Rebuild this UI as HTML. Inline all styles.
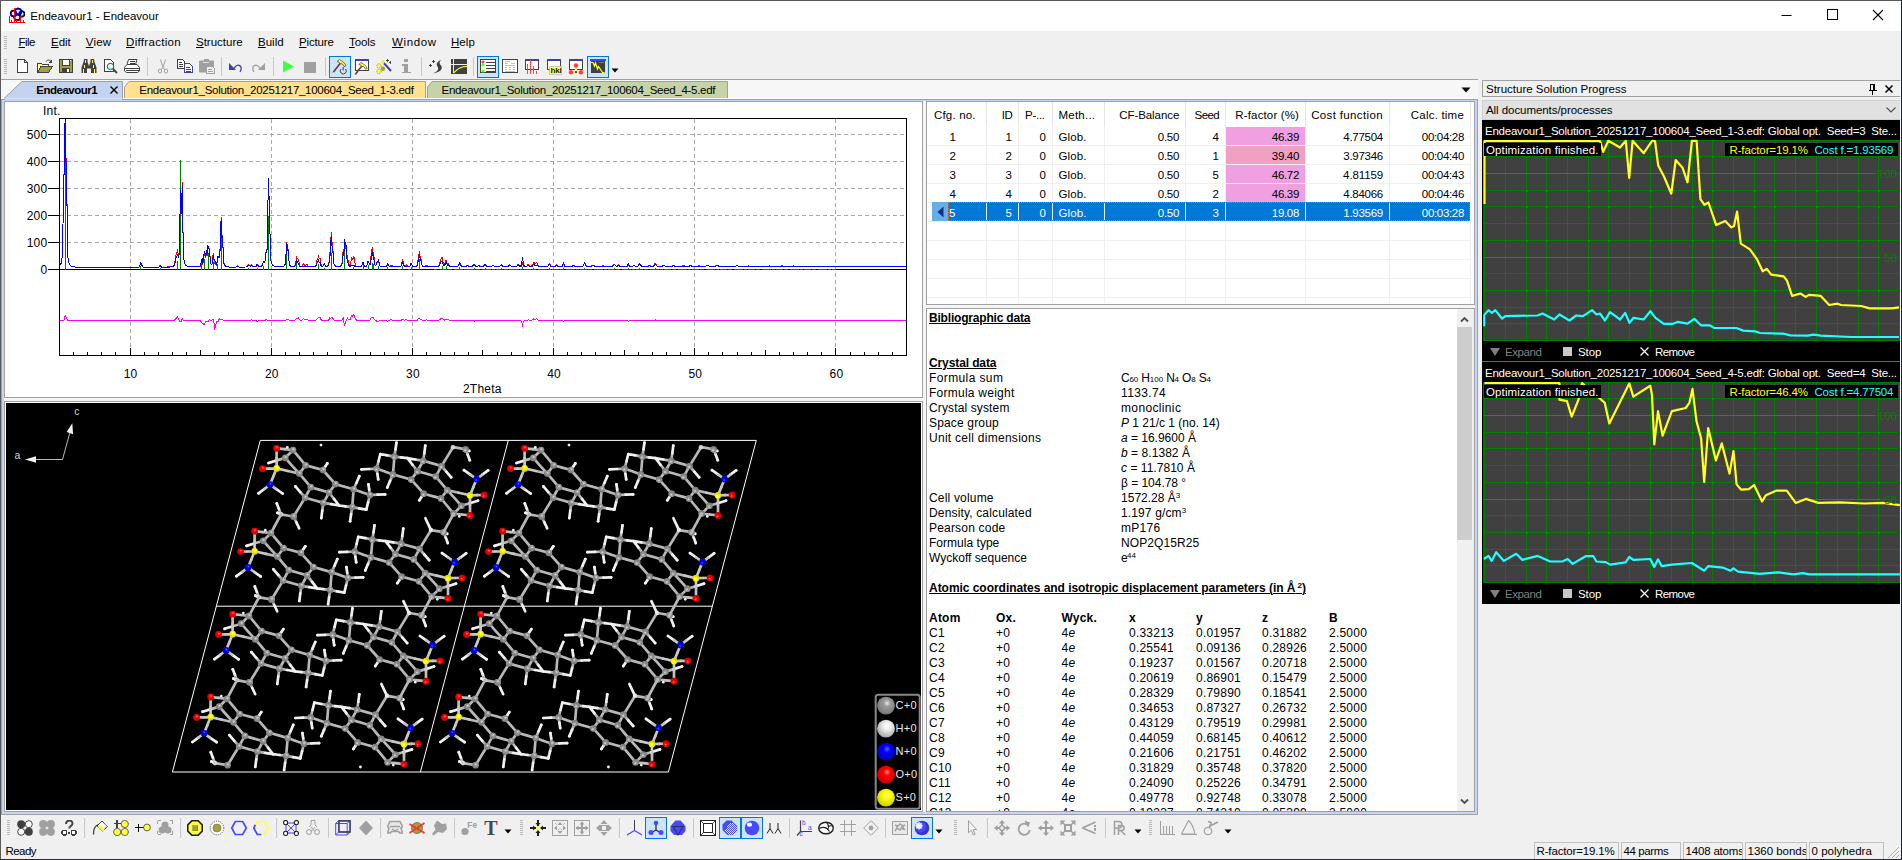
<!DOCTYPE html>
<html><head><meta charset="utf-8"><title>Endeavour1 - Endeavour</title>
<style>
html,body{margin:0;padding:0}
body{width:1902px;height:860px;position:relative;overflow:hidden;background:#f0f0f0;font-family:"Liberation Sans", sans-serif;font-size:12px;color:#000}
u{text-decoration:underline;text-underline-offset:1px}
</style></head><body>
<div style="position:absolute;left:0px;top:0px;width:1902px;height:31px;background:#fff"></div>
<div style="position:absolute;left:30.3px;top:10.87px;font-size:11.5px;line-height:1;white-space:nowrap;color:#000;letter-spacing:0.030px;">Endeavour1 - Endeavour</div>
<svg style="position:absolute;left:1770px;top:0px;" width="132" height="31" viewBox="0 0 132 31"><path d="M11.5 15.5h10" stroke="#000" stroke-width="1" fill="none"/><rect x="57.5" y="9.5" width="10" height="10" stroke="#000" fill="none"/><path d="M103 10l10 10M113 10l-10 10" stroke="#000" stroke-width="1.1" fill="none"/></svg>
<svg style="position:absolute;left:9px;top:7px;" width="16" height="16" viewBox="0 0 16 16"><rect x="2" y="1" width="13" height="12" fill="#b8f4e4" opacity=".55"/><circle cx="4.5" cy="6.5" r="2.8" fill="none" stroke="#0000ff" stroke-width="1.7"/><circle cx="4.5" cy="6.5" r="2.8" fill="none" stroke="#000" stroke-width="1.7" stroke-dasharray="1.3 1.5"/><circle cx="9" cy="4.8" r="3.2" fill="none" stroke="#0000ff" stroke-width="1.7"/><circle cx="9" cy="4.8" r="3.2" fill="none" stroke="#000" stroke-width="1.7" stroke-dasharray="1.3 1.5"/><circle cx="8.3" cy="10.2" r="3" fill="none" stroke="#0000ff" stroke-width="1.7"/><circle cx="8.3" cy="10.2" r="3" fill="none" stroke="#000" stroke-width="1.7" stroke-dasharray="1.3 1.5"/><circle cx="13" cy="7" r="2.6" fill="none" stroke="#0000ff" stroke-width="1.7"/><circle cx="13" cy="7" r="2.6" fill="none" stroke="#000" stroke-width="1.7" stroke-dasharray="1.3 1.5"/><path d="M0 15.5h16M.5 9v7M5.5 1v15M11.5 9v7M2.5 13v3M7.5 13v3M14.5 13v3" stroke="#f00" fill="none" shape-rendering="crispEdges"/></svg>
<div style="position:absolute;left:18.5px;top:36.87px;font-size:11.5px;line-height:1;white-space:nowrap;color:#000;letter-spacing:-0.577px;"><u>F</u>ile</div>
<div style="position:absolute;left:51px;top:36.87px;font-size:11.5px;line-height:1;white-space:nowrap;color:#000;letter-spacing:-0.043px;"><u>E</u>dit</div>
<div style="position:absolute;left:85.8px;top:36.87px;font-size:11.5px;line-height:1;white-space:nowrap;color:#000;letter-spacing:0.160px;"><u>V</u>iew</div>
<div style="position:absolute;left:126px;top:36.87px;font-size:11.5px;line-height:1;white-space:nowrap;color:#000;letter-spacing:0.314px;"><u>D</u>iffraction</div>
<div style="position:absolute;left:196px;top:36.87px;font-size:11.5px;line-height:1;white-space:nowrap;color:#000;letter-spacing:-0.009px;"><u>S</u>tructure</div>
<div style="position:absolute;left:258px;top:36.87px;font-size:11.5px;line-height:1;white-space:nowrap;color:#000;letter-spacing:0.005px;"><u>B</u>uild</div>
<div style="position:absolute;left:299px;top:36.87px;font-size:11.5px;line-height:1;white-space:nowrap;color:#000;letter-spacing:-0.166px;"><u>P</u>icture</div>
<div style="position:absolute;left:349px;top:36.87px;font-size:11.5px;line-height:1;white-space:nowrap;color:#000;letter-spacing:-0.090px;"><u>T</u>ools</div>
<div style="position:absolute;left:392px;top:36.87px;font-size:11.5px;line-height:1;white-space:nowrap;color:#000;letter-spacing:0.619px;"><u>W</u>indow</div>
<div style="position:absolute;left:451px;top:36.87px;font-size:11.5px;line-height:1;white-space:nowrap;color:#000;letter-spacing:0.048px;"><u>H</u>elp</div>
<svg style="position:absolute;left:4px;top:36px;" width="3" height="13" viewBox="0 0 3 13"><rect x="0" y="0" width="3" height="1" fill="#b8b8b8"/><rect x="0" y="2" width="3" height="1" fill="#b8b8b8"/><rect x="0" y="4" width="3" height="1" fill="#b8b8b8"/><rect x="0" y="6" width="3" height="1" fill="#b8b8b8"/><rect x="0" y="8" width="3" height="1" fill="#b8b8b8"/><rect x="0" y="10" width="3" height="1" fill="#b8b8b8"/><rect x="0" y="12" width="3" height="1" fill="#b8b8b8"/></svg>
<svg style="position:absolute;left:4px;top:59px;" width="3" height="15" viewBox="0 0 3 15"><rect x="0" y="0" width="3" height="1" fill="#b8b8b8"/><rect x="0" y="2" width="3" height="1" fill="#b8b8b8"/><rect x="0" y="4" width="3" height="1" fill="#b8b8b8"/><rect x="0" y="6" width="3" height="1" fill="#b8b8b8"/><rect x="0" y="8" width="3" height="1" fill="#b8b8b8"/><rect x="0" y="10" width="3" height="1" fill="#b8b8b8"/><rect x="0" y="12" width="3" height="1" fill="#b8b8b8"/><rect x="0" y="14" width="3" height="1" fill="#b8b8b8"/></svg>
<div style="position:absolute;left:1px;top:79px;width:1477px;height:1px;background:#a0a0a0"></div>
<div style="position:absolute;left:1px;top:80px;width:1477px;height:19px;background:#f7f7f7"></div>
<div style="position:absolute;left:1px;top:98px;width:1477px;height:1px;background:#fff"></div>
<div style="position:absolute;left:1px;top:99px;width:1477px;height:716px;background:#c4d5f5;box-sizing:border-box;border:1px solid #a0a0a0"></div>
<svg style="position:absolute;left:0px;top:79px;" width="760" height="22" viewBox="0 0 760 22"><path d="M4 19.5 L22 2.5 H122.5 V19.5" fill="#c4d3f0" stroke="#a0a0a0"/><path d="M5 20.5H122" stroke="#c4d3f0" stroke-width="2"/><path d="M124.5 19 V8 L129 2.5 H425.5 V19" fill="#ffe18e" stroke="#a0a0a0"/><path d="M427.5 19 V8 L432 2.5 H727.5 V19" fill="#c5d3a6" stroke="#a0a0a0"/><path d="M110.5 7.5l7 7M117.5 7.5l-7 7" stroke="#000" stroke-width="1.4"/></svg>
<div style="position:absolute;left:36.3px;top:85.07px;font-size:11.5px;line-height:1;white-space:nowrap;color:#000;font-weight:bold;letter-spacing:-0.503px;">Endeavour1</div>
<div style="position:absolute;left:139.3px;top:85.07px;font-size:11.5px;line-height:1;white-space:nowrap;color:#000;letter-spacing:-0.280px;">Endeavour1_Solution_20251217_100604_Seed_1-3.edf</div>
<div style="position:absolute;left:441.5px;top:85.07px;font-size:11.5px;line-height:1;white-space:nowrap;color:#000;letter-spacing:-0.293px;">Endeavour1_Solution_20251217_100604_Seed_4-5.edf</div>
<svg style="position:absolute;left:1460px;top:86px;" width="12" height="8" viewBox="0 0 12 8"><path d="M1.5 1.5h9l-4.5 5z" fill="#000"/></svg>
<div style="position:absolute;left:4px;top:101px;width:919px;height:297px;background:#fff;box-sizing:border-box;border:1px solid #a0a0a0"><svg style="position:absolute;left:0;top:0" width="917" height="295" viewBox="5 102 917 295"><path d="M60 242.5H906M60 215.5H906M60 188.5H906M60 161.5H906M60 134.5H906M130.5 119V355M271.5 119V355M412.5 119V355M553.5 119V355M694.5 119V355M835.5 119V355" stroke="#a8a8a8" stroke-dasharray="4 3" fill="none" shape-rendering="crispEdges"/><path d="M48 269.5H59M48 242.5H59M48 215.5H59M48 188.5H59M48 161.5H59M48 134.5H59M73.5 355V352M87.5 355V352M101.5 355V352M115.5 355V352M130.5 355V348M144.5 355V352M158.5 355V352M172.5 355V352M186.5 355V352M200.5 355V350M214.5 355V352M228.5 355V352M243.5 355V352M257.5 355V352M271.5 355V348M285.5 355V352M299.5 355V352M313.5 355V352M327.5 355V352M341.5 355V350M355.5 355V352M370.5 355V352M384.5 355V352M398.5 355V352M412.5 355V348M426.5 355V352M440.5 355V352M454.5 355V352M468.5 355V352M482.5 355V350M497.5 355V352M511.5 355V352M525.5 355V352M539.5 355V352M553.5 355V348M567.5 355V352M581.5 355V352M595.5 355V352M610.5 355V352M624.5 355V350M638.5 355V352M652.5 355V352M666.5 355V352M680.5 355V352M694.5 355V348M708.5 355V352M722.5 355V352M737.5 355V352M751.5 355V352M765.5 355V350M779.5 355V352M793.5 355V352M807.5 355V352M821.5 355V352M835.5 355V348M850.5 355V352M864.5 355V352M878.5 355V352M892.5 355V352M906.5 355V350" stroke="#000" fill="none" shape-rendering="crispEdges"/><path d="M59 269.5H907" stroke="#000" shape-rendering="crispEdges"/><path d="M300 269.5H440" stroke="#008000" stroke-dasharray="2 9 1 14 3 7" shape-rendering="crispEdges"/><path d="M440 269.5H836" stroke="#008000" stroke-dasharray="7 1 4 2 9 1 3 1" shape-rendering="crispEdges"/><path d="M65.5 270V119M140.5 270V266M160.5 270V268M177.5 270V261M180.5 270V160M201.5 270V264M204.5 270V259M208.5 270V253M213.5 270V262M217.5 270V264M221.5 270V221M248.5 270V268M257.5 270V268M263.5 270V266M268.5 270V216M286.5 270V245M296.5 270V263M318.5 270V264M324.5 270V268M331.5 270V253M344.5 270V251M353.5 270V267M363.5 270V265M368.5 270V265M372.5 270V263M373.5 270V264M378.5 270V266M387.5 270V267M402.5 270V266M411.5 270V267M419.5 270V259M442.5 270V266M446.5 270V266M459.5 270V267M467.5 270V269M474.5 270V268M485.5 270V268M492.5 270V269M501.5 270V268M509.5 270V269M522.5 270V267M533.5 270V268M549.5 270V268M563.5 270V268M573.5 270V269M584.5 270V268M614.5 270V268M628.5 270V268M639.5 270V268M655.5 270V268M673.5 270V269M690.5 270V269M707.5 270V269M737.5 270V269" stroke="#008000" fill="none" shape-rendering="crispEdges"/><polyline points="59.5,265.6 60.2,265.0 60.9,263.8 61.6,261.7 62.3,255.2 63.0,224.1 63.7,186.9 64.4,159.6 65.1,118.5 65.9,158.2 66.6,158.0 67.3,237.5 68.0,257.9 68.7,262.1 69.4,264.0 70.1,265.1 70.8,265.7 71.5,266.1 72.2,266.4 72.9,266.6 73.6,266.8 75.0,267.0 77.1,267.2 80.7,267.4 91.3,267.5 137.8,267.3 138.6,267.2 139.3,266.8 140.0,265.3 140.7,263.0 141.4,263.4 142.1,265.7 142.8,266.9 143.5,267.2 144.9,267.4 158.3,267.2 159.0,266.9 159.7,265.7 160.4,265.4 161.1,266.7 161.8,267.2 170.3,266.9 171.7,266.7 172.4,266.5 173.1,266.2 173.8,265.6 174.6,263.9 175.3,259.5 176.0,255.0 176.7,253.6 177.4,249.5 178.1,253.6 178.8,257.5 179.5,248.0 180.2,204.0 180.9,190.6 181.6,213.2 182.3,182.5 183.0,231.7 183.7,257.9 184.4,262.5 185.1,264.3 185.8,265.2 186.5,265.8 187.3,266.2 188.0,266.4 188.7,266.6 190.1,266.8 192.2,267.0 199.3,266.7 200.0,266.4 200.7,265.2 201.4,261.9 202.1,261.0 202.8,263.7 203.5,262.3 204.2,254.0 204.9,255.0 205.6,258.3 206.3,252.1 207.0,255.8 207.7,247.9 208.4,248.4 209.1,248.3 209.8,253.4 210.5,263.1 211.3,264.7 212.0,263.9 212.7,257.6 213.4,252.7 214.1,260.6 214.8,263.7 215.5,264.8 216.2,265.2 216.9,263.6 217.6,258.3 218.3,258.0 219.0,256.3 219.7,253.5 220.4,244.6 221.1,217.5 221.8,236.6 222.5,235.6 223.3,254.0 224.0,263.4 224.7,265.2 225.4,266.0 226.1,266.4 226.8,266.6 227.5,266.8 228.9,267.0 231.7,267.1 236.0,267.0 236.7,266.5 237.4,265.9 238.1,266.5 238.8,267.0 240.2,267.2 245.8,267.0 246.5,266.8 247.3,266.3 248.0,265.3 248.7,264.7 249.4,265.2 250.1,266.0 250.8,265.6 251.5,264.8 252.2,265.8 252.9,266.7 253.6,266.9 255.0,266.9 255.7,266.7 256.4,266.1 257.1,265.3 257.8,266.0 258.5,266.6 260.7,266.4 261.4,266.2 262.1,265.4 262.8,263.3 263.5,261.4 264.2,262.2 264.9,262.1 265.6,255.5 266.3,248.9 267.0,250.8 267.7,217.9 268.4,177.8 269.1,198.9 269.8,224.5 270.5,255.9 271.2,262.3 272.0,264.3 272.7,265.2 273.4,265.8 274.1,266.1 274.8,266.4 275.5,266.5 276.9,266.7 282.5,266.6 283.2,266.4 284.0,266.0 284.7,265.3 285.4,263.0 286.1,253.2 286.8,241.7 287.5,248.1 288.2,249.5 288.9,259.8 289.6,264.9 290.3,265.8 291.0,266.2 291.7,266.4 293.8,266.3 294.5,266.0 295.2,264.6 296.0,260.8 296.7,257.3 297.4,258.9 298.1,259.0 298.8,261.0 299.5,264.8 300.2,266.1 300.9,266.4 301.6,266.4 302.3,265.9 303.0,264.6 303.7,263.9 304.4,265.2 305.1,266.0 305.8,265.6 306.5,264.6 307.2,264.8 308.0,266.0 308.7,266.7 309.4,266.8 314.3,266.7 315.0,266.4 315.7,265.8 316.4,263.3 317.1,259.9 317.8,258.7 318.5,256.4 319.2,258.6 320.0,257.8 320.7,263.2 321.4,265.8 322.1,266.2 322.8,266.2 323.5,265.5 324.2,264.2 324.9,264.9 325.6,266.1 326.3,266.3 327.0,266.2 327.7,265.8 328.4,265.0 329.1,261.2 329.8,253.5 330.5,249.1 331.2,232.4 332.0,242.0 332.7,243.4 333.4,259.2 334.1,264.5 334.8,265.6 335.5,266.0 336.2,266.3 337.6,266.5 339.7,266.3 340.4,266.1 341.1,265.8 341.8,264.8 342.5,259.5 343.2,249.4 344.0,251.5 344.7,243.1 345.4,247.9 346.1,246.9 346.8,256.9 347.5,256.0 348.2,261.9 348.9,264.9 349.6,265.2 350.3,264.3 351.0,261.2 351.7,258.3 352.4,259.5 353.1,258.5 353.8,256.1 354.5,259.9 355.2,264.3 355.9,265.8 356.7,266.3 357.4,266.5 358.8,266.6 360.9,266.6 361.6,266.2 362.3,264.6 363.0,262.8 363.7,264.6 364.4,266.1 365.1,266.4 365.8,266.4 366.5,266.2 367.2,264.9 367.9,262.0 368.7,262.3 369.4,264.6 370.1,264.1 370.8,258.1 371.5,252.7 372.2,247.2 372.9,251.9 373.6,252.4 374.3,260.8 375.0,265.0 375.7,265.4 376.4,264.4 377.1,262.8 377.8,262.3 378.5,261.3 379.2,263.9 379.9,266.0 380.7,266.5 381.4,266.7 383.5,266.8 385.6,266.7 386.3,266.4 387.0,265.6 387.7,264.9 388.4,265.5 389.1,266.2 389.8,266.1 390.5,265.4 391.2,264.9 391.9,265.4 392.7,266.2 393.4,266.6 394.1,266.8 399.7,266.6 400.4,266.4 401.1,265.7 401.8,263.2 402.5,260.3 403.2,261.7 403.9,264.8 404.7,265.8 405.4,265.3 406.1,264.7 406.8,265.4 407.5,266.3 408.2,266.6 409.6,266.4 410.3,265.6 411.0,263.5 411.7,263.8 412.4,265.9 413.1,266.5 415.2,266.5 415.9,266.4 416.7,266.0 417.4,264.7 418.1,259.4 418.8,255.7 419.5,250.7 420.2,257.9 420.9,258.8 421.6,263.5 422.3,265.8 423.0,266.3 424.4,266.3 425.1,266.0 425.8,265.7 426.5,265.5 427.2,265.7 427.9,266.1 428.7,266.5 429.4,266.7 437.8,266.4 438.5,266.2 439.2,265.3 439.9,262.9 440.6,260.0 441.4,258.3 442.1,257.5 442.8,260.9 443.5,264.3 444.2,265.1 444.9,263.9 445.6,260.9 446.3,260.4 447.0,263.1 447.7,264.0 448.4,263.7 449.1,264.8 449.8,266.0 450.5,266.5 451.9,266.7 456.9,266.6 457.6,266.4 458.3,265.8 459.0,264.5 459.7,263.6 460.4,264.5 461.1,265.8 461.8,266.4 462.5,266.6 465.4,266.6 466.1,266.3 466.8,265.8 467.5,265.5 468.2,265.8 468.9,266.3 469.6,266.6 471.7,266.7 472.4,266.5 473.1,265.8 473.8,264.8 474.5,265.0 475.2,266.0 475.9,266.5 476.6,266.5 477.4,266.3 478.1,265.8 478.8,265.4 479.5,265.8 480.2,266.3 480.9,266.6 482.3,266.6 483.0,266.4 483.7,265.8 484.4,264.8 485.1,264.1 485.8,264.8 486.5,265.8 487.2,266.4 487.9,266.6 490.8,266.6 491.5,266.2 492.2,265.6 492.9,265.2 493.6,265.6 494.3,266.2 495.0,266.6 496.4,266.7 499.2,266.6 499.9,266.3 500.6,265.6 501.4,265.2 502.1,265.6 502.8,266.3 503.5,266.6 507.0,266.7 507.7,266.5 508.4,266.1 509.1,265.2 509.8,264.7 510.5,265.2 511.2,266.1 511.9,266.5 512.6,266.7 516.2,266.6 516.9,266.2 517.6,265.0 518.3,264.1 519.0,265.0 519.7,266.1 520.4,266.4 521.1,266.3 521.8,265.2 522.5,263.5 523.2,265.2 523.9,266.3 524.6,266.5 526.1,266.4 526.8,266.0 527.5,265.1 528.2,264.6 528.9,265.1 529.6,265.9 530.3,266.3 531.0,266.3 531.7,266.0 532.4,265.1 533.1,263.4 533.8,262.2 534.5,263.0 535.2,263.9 535.9,263.3 536.6,262.7 537.3,263.8 538.1,265.3 538.8,266.2 539.5,266.5 540.9,266.7 547.2,266.5 547.9,266.1 548.6,264.7 549.3,263.6 550.1,264.7 550.8,266.1 551.5,266.5 554.3,266.5 555.0,266.1 555.7,265.4 556.4,265.0 557.1,265.4 557.8,266.2 558.5,266.5 559.9,266.7 561.3,266.7 562.1,266.4 562.8,265.4 563.5,264.2 564.2,265.4 564.9,266.4 565.6,266.7 571.2,266.6 571.9,266.3 572.6,265.7 573.3,265.3 574.1,265.6 574.8,266.3 575.5,266.6 576.9,266.8 581.8,266.6 582.5,266.5 583.2,265.8 583.9,264.0 584.6,262.5 585.3,264.0 586.1,265.8 586.8,266.4 587.5,266.6 590.3,266.5 591.0,266.3 591.7,265.8 592.4,265.3 593.1,265.0 593.8,265.3 594.5,265.8 595.2,266.3 595.9,266.6 597.3,266.7 600.9,266.5 601.6,266.3 602.3,265.9 603.0,265.8 603.7,265.9 604.4,266.3 605.1,266.5 606.5,266.8 611.5,266.6 612.2,266.4 612.9,265.8 613.6,264.8 614.3,264.1 615.0,264.7 615.7,265.7 616.4,266.2 617.1,266.0 617.8,265.3 618.5,264.9 619.2,265.4 619.9,266.1 620.6,266.5 622.0,266.7 626.3,266.7 627.0,266.5 627.7,265.7 628.4,264.7 629.1,265.6 629.8,266.5 630.5,266.7 631.9,266.6 632.6,266.3 633.3,265.8 634.0,265.5 634.8,265.8 635.5,266.3 636.2,266.5 636.9,266.6 637.6,266.4 638.3,265.8 639.0,264.8 639.7,264.2 640.4,264.8 641.1,265.9 641.8,266.4 642.5,266.6 647.5,266.6 648.2,266.2 648.9,265.6 649.6,265.2 650.3,265.6 651.0,266.2 651.7,266.4 652.4,266.5 653.1,266.2 653.8,265.5 654.5,264.2 655.2,263.3 655.9,264.2 656.6,265.5 657.3,266.3 658.0,266.5 660.9,266.6 661.6,266.3 662.3,265.9 663.0,265.5 663.7,265.2 664.4,265.5 665.1,266.0 665.8,266.4 666.5,266.6 670.8,266.6 671.5,266.5 672.2,266.1 672.9,265.7 673.6,265.5 674.3,265.7 675.0,266.1 675.7,266.5 676.4,266.7 681.3,266.5 682.0,266.3 682.8,265.9 683.5,265.8 684.2,265.9 684.9,266.3 685.6,266.5 687.0,266.7 688.4,266.7 689.1,266.4 689.8,266.0 690.5,265.8 691.2,266.0 691.9,266.5 692.6,266.7 696.2,266.7 696.9,266.5 697.6,266.1 698.3,265.7 699.0,265.5 699.7,265.7 700.4,266.1 701.1,266.4 701.8,266.6 704.6,266.6 705.3,266.4 706.0,266.0 706.7,265.5 707.5,265.2 708.2,265.5 708.9,266.0 709.6,266.4 710.3,266.6 714.5,266.6 715.2,266.3 715.9,265.8 716.6,265.3 717.3,265.0 718.0,265.3 718.7,265.8 719.5,266.3 720.2,266.6 721.6,266.7 725.1,266.6 725.8,266.4 726.5,266.2 727.9,266.2 728.6,266.4 729.3,266.6 730.7,266.8 734.3,266.7 735.0,266.5 735.7,266.1 736.4,265.7 737.1,265.5 737.8,265.7 738.5,266.1 739.2,266.5 739.9,266.7 746.3,266.6 747.0,266.3 747.7,266.0 748.4,265.8 749.1,266.0 749.8,266.3 750.5,266.6 751.2,266.7 756.2,266.6 756.9,266.4 757.6,266.2 759.0,266.2 759.7,266.4 760.4,266.7 761.8,266.8 766.7,266.7 767.5,266.6 768.2,266.3 768.9,266.0 769.6,265.8 770.3,266.0 771.0,266.3 771.7,266.6 772.4,266.7 779.4,266.7 780.2,266.6 780.9,266.3 781.6,266.0 782.3,265.8 783.0,266.0 783.7,266.3 784.4,266.6 785.1,266.7 790.7,266.7 791.4,266.6 792.2,266.3 792.9,266.0 793.6,265.8 794.3,266.0 795.0,266.3 795.7,266.6 796.4,266.7 805.6,266.7 806.3,266.5 807.0,266.2 808.4,266.2 809.1,266.5 809.8,266.7 811.2,266.8 819.7,266.7 820.4,266.5 821.1,266.2 822.5,266.2 823.2,266.5 823.9,266.7 825.3,266.9 835.9,266.9" fill="none" stroke="#ff0000" stroke-width="1" stroke-linejoin="miter" shape-rendering="crispEdges"/><polyline points="59.5,265.7 60.2,265.0 60.9,263.9 61.6,261.8 62.3,255.3 63.0,224.3 63.7,187.3 64.4,160.9 65.1,118.5 65.9,161.4 66.6,161.2 67.3,238.3 68.0,258.2 68.7,262.3 69.4,264.1 70.1,265.1 70.8,265.7 71.5,266.2 72.2,266.4 72.9,266.7 73.6,266.8 75.0,267.0 77.1,267.2 80.7,267.4 92.0,267.5 137.8,267.3 138.6,267.2 139.3,266.8 140.0,265.3 140.7,263.0 141.4,263.4 142.1,265.7 142.8,266.9 143.5,267.2 144.9,267.4 158.3,267.3 159.0,267.0 159.7,266.1 160.4,265.9 161.1,266.8 161.8,267.2 170.3,267.0 171.7,266.8 172.4,266.6 173.1,266.4 173.8,265.9 174.6,264.7 175.3,261.4 176.0,258.2 176.7,257.1 177.4,254.0 178.1,256.5 178.8,258.3 179.5,247.9 180.2,202.3 180.9,188.6 181.6,213.7 182.3,185.1 183.0,232.8 183.7,258.1 184.4,262.6 185.1,264.4 185.8,265.3 186.5,265.8 187.3,266.2 188.0,266.4 188.7,266.6 190.1,266.8 192.2,267.0 198.5,266.8 199.3,266.6 200.0,266.2 200.7,264.6 201.4,260.1 202.1,258.9 202.8,262.7 203.5,261.1 204.2,251.0 204.9,252.3 205.6,256.9 206.3,250.4 207.0,254.5 207.7,245.9 208.4,247.0 209.1,249.4 209.8,254.5 210.5,263.3 211.3,264.8 212.0,264.2 212.7,259.3 213.4,255.2 214.1,259.5 214.8,259.9 215.5,262.7 216.2,264.5 216.9,262.9 217.6,256.5 218.3,256.7 219.0,257.8 219.7,255.8 220.4,245.6 221.1,218.8 221.8,237.6 222.5,237.1 223.3,254.6 224.0,263.6 224.7,265.3 225.4,266.0 226.1,266.4 226.8,266.6 227.5,266.8 228.9,267.0 231.7,267.1 236.0,267.0 236.7,266.6 237.4,266.1 238.1,266.6 238.8,267.1 245.8,267.0 246.5,266.9 247.3,266.4 248.0,265.5 248.7,265.0 249.4,265.5 250.1,266.2 250.8,266.1 251.5,265.6 252.2,266.3 252.9,266.8 255.0,266.8 255.7,266.6 256.4,265.4 257.1,264.0 257.8,265.3 258.5,266.4 259.3,266.6 260.7,266.5 261.4,266.2 262.1,265.5 262.8,263.7 263.5,262.0 264.2,262.7 264.9,262.5 265.6,256.4 266.3,250.3 267.0,251.3 267.7,218.0 268.4,177.9 269.1,199.0 269.8,224.6 270.5,255.9 271.2,262.4 272.0,264.3 272.7,265.3 273.4,265.8 274.1,266.1 274.8,266.4 275.5,266.5 276.9,266.7 282.5,266.6 283.2,266.4 284.0,266.1 284.7,265.5 285.4,263.3 286.1,254.1 286.8,243.4 287.5,249.5 288.2,251.0 288.9,260.5 289.6,265.1 290.3,266.0 291.0,266.4 291.7,266.6 293.8,266.6 294.5,266.4 295.2,265.5 296.0,263.0 296.7,260.7 297.4,262.1 298.1,262.9 298.8,264.1 299.5,266.0 300.2,266.6 300.9,266.8 302.3,266.8 303.0,266.4 303.7,266.3 304.4,266.6 305.1,266.8 305.8,266.7 306.5,266.4 307.2,266.4 308.0,266.8 308.7,267.0 315.0,266.7 315.7,266.3 316.4,264.7 317.1,262.6 317.8,261.7 318.5,260.2 319.2,262.1 320.0,262.4 320.7,265.1 321.4,266.3 322.1,266.5 322.8,266.4 323.5,265.5 324.2,263.9 324.9,264.8 325.6,266.1 326.3,266.4 327.0,266.4 327.7,266.1 328.4,265.5 329.1,263.0 329.8,257.7 330.5,252.1 331.2,236.3 332.0,245.6 332.7,247.4 333.4,260.5 334.1,264.9 334.8,265.8 335.5,266.2 336.2,266.4 337.6,266.6 339.7,266.5 340.4,266.3 341.1,266.0 341.8,265.2 342.5,261.5 343.2,254.1 344.0,251.6 344.7,238.7 345.4,245.7 346.1,245.9 346.8,258.1 347.5,259.8 348.2,263.7 348.9,265.7 349.6,266.1 350.3,266.1 351.0,265.6 351.7,265.1 352.4,265.5 353.1,265.5 353.8,265.3 354.5,265.9 355.2,266.5 355.9,266.8 360.9,266.7 361.6,266.3 362.3,264.5 363.0,262.4 363.7,264.4 364.4,266.1 365.1,266.5 365.8,266.5 366.5,266.2 367.2,264.9 367.9,261.7 368.7,262.1 369.4,264.8 370.1,264.9 370.8,261.0 371.5,257.0 372.2,251.4 372.9,255.2 373.6,256.2 374.3,262.3 375.0,265.3 375.7,265.4 376.4,263.7 377.1,261.3 377.8,261.0 378.5,260.1 379.2,263.3 379.9,265.8 380.7,266.4 381.4,266.6 382.8,266.8 385.6,266.7 386.3,266.2 387.0,265.0 387.7,263.9 388.4,265.0 389.1,266.2 389.8,266.5 390.5,266.3 391.2,266.2 391.9,266.4 392.7,266.7 393.4,266.8 399.7,266.8 400.4,266.6 401.1,266.0 401.8,264.2 402.5,262.0 403.2,263.2 403.9,265.4 404.7,266.3 405.4,266.2 406.1,266.0 406.8,266.3 407.5,266.6 408.9,266.7 409.6,266.5 410.3,265.6 411.0,263.5 411.7,263.9 412.4,265.9 413.1,266.6 415.9,266.5 416.7,266.3 417.4,265.3 418.1,261.4 418.8,258.3 419.5,253.7 420.2,259.7 420.9,260.7 421.6,264.3 422.3,266.1 423.0,266.5 427.2,266.4 427.9,266.6 429.4,266.8 437.8,266.6 438.5,266.5 439.2,265.9 439.9,264.3 440.6,262.5 441.4,261.6 442.1,261.2 442.8,263.3 443.5,265.3 444.2,265.7 444.9,264.8 445.6,262.5 446.3,262.1 447.0,264.2 447.7,265.0 448.4,264.9 449.1,265.6 449.8,266.4 450.5,266.6 452.6,266.8 456.9,266.6 457.6,266.4 458.3,265.7 459.0,264.2 459.7,263.1 460.4,264.2 461.1,265.7 461.8,266.4 462.5,266.6 465.4,266.7 466.1,266.4 466.8,266.0 467.5,265.8 468.2,266.0 468.9,266.4 469.6,266.7 471.7,266.6 472.4,266.4 473.1,265.5 473.8,264.1 474.5,264.3 475.2,265.7 475.9,266.4 476.6,266.5 477.4,266.4 478.1,266.0 478.8,265.7 479.5,266.0 480.2,266.4 480.9,266.6 483.0,266.5 483.7,266.0 484.4,265.2 485.1,264.7 485.8,265.2 486.5,266.1 487.2,266.5 487.9,266.7 490.8,266.6 491.5,266.2 492.2,265.6 492.9,265.2 493.6,265.6 494.3,266.3 495.0,266.6 497.1,266.8 499.2,266.6 499.9,266.2 500.6,265.4 501.4,265.0 502.1,265.4 502.8,266.2 503.5,266.6 504.9,266.7 507.7,266.6 508.4,266.3 509.1,265.6 509.8,265.2 510.5,265.6 511.2,266.3 511.9,266.6 514.1,266.7 516.2,266.6 516.9,266.3 517.6,265.4 518.3,264.6 519.0,265.3 519.7,266.1 520.4,266.2 521.1,265.6 521.8,262.1 522.5,257.1 523.2,262.1 523.9,265.6 524.6,266.3 525.3,266.4 526.1,266.4 526.8,266.2 527.5,265.7 528.2,265.4 528.9,265.7 529.6,266.2 530.3,266.5 531.7,266.4 532.4,266.0 533.1,265.1 533.8,264.6 534.5,265.0 535.2,265.5 535.9,265.3 536.6,265.1 537.3,265.5 538.1,266.2 538.8,266.6 540.2,266.8 547.2,266.6 547.9,266.2 548.6,265.1 549.3,264.2 550.1,265.1 550.8,266.2 551.5,266.6 554.3,266.6 555.0,266.4 555.7,265.8 556.4,265.5 557.1,265.8 557.8,266.4 558.5,266.6 561.3,266.6 562.1,266.3 562.8,264.8 563.5,263.1 564.2,264.8 564.9,266.3 565.6,266.6 567.7,266.8 571.2,266.7 571.9,266.4 572.6,265.9 573.3,265.5 574.1,265.9 574.8,266.4 575.5,266.7 578.3,266.8 581.8,266.7 582.5,266.5 583.2,266.0 583.9,264.4 584.6,263.1 585.3,264.4 586.1,266.0 586.8,266.5 588.2,266.7 590.3,266.6 591.0,266.5 591.7,266.1 592.4,265.7 593.1,265.5 593.8,265.7 594.5,266.1 595.2,266.5 595.9,266.7 600.9,266.6 601.6,266.4 602.3,266.2 603.7,266.2 604.4,266.4 605.1,266.6 606.5,266.8 611.5,266.7 612.2,266.5 612.9,266.1 613.6,265.2 614.3,264.7 615.0,265.2 615.7,266.0 616.4,266.4 617.1,266.2 617.8,265.8 618.5,265.5 619.2,265.8 619.9,266.3 620.6,266.6 622.8,266.8 626.3,266.7 627.0,266.4 627.7,265.1 628.4,263.6 629.1,265.1 629.8,266.3 630.5,266.6 631.9,266.6 632.6,266.4 633.3,266.0 634.0,265.7 634.8,266.0 635.5,266.4 636.2,266.5 636.9,266.5 637.6,266.3 638.3,265.7 639.0,264.4 639.7,263.6 640.4,264.4 641.1,265.7 641.8,266.4 642.5,266.6 644.6,266.8 647.5,266.7 648.2,266.4 648.9,266.0 649.6,265.7 650.3,266.0 651.0,266.4 651.7,266.6 652.4,266.6 653.1,266.4 653.8,265.8 654.5,264.8 655.2,264.2 655.9,264.8 656.6,265.9 657.3,266.4 658.0,266.6 660.9,266.6 661.6,266.5 662.3,266.1 663.0,265.7 663.7,265.5 664.4,265.7 665.1,266.1 665.8,266.5 666.5,266.7 671.5,266.6 672.2,266.3 672.9,266.0 673.6,265.8 674.3,266.0 675.0,266.3 675.7,266.6 676.4,266.7 681.3,266.6 682.0,266.4 682.8,266.2 684.2,266.2 684.9,266.4 685.6,266.6 688.4,266.6 689.1,266.4 689.8,265.8 690.5,265.5 691.2,265.9 691.9,266.4 692.6,266.7 696.9,266.6 697.6,266.4 698.3,266.2 699.7,266.2 700.4,266.4 701.1,266.6 704.6,266.7 705.3,266.5 706.0,266.1 706.7,265.7 707.5,265.5 708.2,265.7 708.9,266.1 709.6,266.5 710.3,266.7 714.5,266.7 715.2,266.5 715.9,266.1 716.6,265.7 717.3,265.5 718.0,265.7 718.7,266.1 719.5,266.5 720.2,266.7 725.1,266.6 725.8,266.4 726.5,266.2 727.9,266.2 728.6,266.4 729.3,266.6 730.7,266.8 735.0,266.6 735.7,266.3 736.4,266.0 737.1,265.8 737.8,266.0 738.5,266.3 739.2,266.6 739.9,266.7 746.3,266.7 747.0,266.5 747.7,266.2 749.1,266.2 749.8,266.5 750.5,266.7 751.9,266.8 756.2,266.7 756.9,266.5 757.6,266.2 759.0,266.2 759.7,266.5 760.4,266.7 761.8,266.8 767.5,266.7 768.2,266.5 768.9,266.2 770.3,266.2 771.0,266.5 771.7,266.7 773.1,266.8 780.2,266.7 780.9,266.5 781.6,266.2 783.0,266.2 783.7,266.5 784.4,266.7 785.8,266.8 791.4,266.7 792.2,266.5 792.9,266.2 794.3,266.2 795.0,266.5 795.7,266.7 797.1,266.8 806.3,266.6 807.0,266.5 808.4,266.5 809.1,266.6 810.5,266.8 820.4,266.6 821.1,266.5 822.5,266.5 823.2,266.6 824.6,266.8 906.0,266.9" fill="none" stroke="#0000ff" stroke-width="1" stroke-linejoin="miter" shape-rendering="crispEdges"/><polyline points="59.5,320.5 63.0,320.4 63.7,320.2 64.4,319.0 65.1,315.2 65.9,317.2 66.6,318.1 67.3,319.9 68.0,320.3 68.7,320.4 72.2,320.5 159.0,320.4 159.7,320.2 160.4,320.2 161.1,320.4 161.8,320.5 173.1,320.4 173.8,320.3 174.6,320.0 175.3,319.1 176.0,318.3 176.7,318.0 177.4,317.3 178.1,318.5 178.8,319.9 179.5,320.6 180.2,321.7 180.9,321.9 181.6,320.2 182.3,318.7 183.0,319.8 183.7,320.3 184.4,320.4 192.9,320.5 199.3,320.6 200.0,320.7 200.7,321.1 201.4,322.3 202.1,323.2 202.8,323.3 203.5,323.7 204.2,324.7 204.9,323.6 205.6,321.9 206.3,321.9 207.0,321.4 207.7,321.9 208.4,321.4 209.1,319.7 209.8,319.7 210.5,320.4 211.3,320.4 212.0,320.3 212.7,319.4 213.4,319.5 214.1,323.9 214.8,328.2 215.5,326.7 216.2,323.1 216.9,321.5 217.6,321.8 218.3,321.4 219.0,319.5 219.7,318.9 220.4,319.8 221.1,319.6 221.8,319.8 222.5,319.5 223.3,320.1 224.0,320.4 226.1,320.5 236.7,320.4 237.4,320.3 238.1,320.4 239.5,320.5 248.0,320.3 250.1,320.3 250.8,320.2 251.5,319.9 252.2,320.2 252.9,320.4 254.3,320.5 255.0,320.5 255.7,320.6 256.4,321.0 257.1,321.4 257.8,321.0 258.5,320.6 259.3,320.5 262.1,320.4 262.8,320.2 263.5,320.1 264.2,320.2 264.9,320.3 265.6,319.9 266.3,319.6 267.0,320.1 267.7,320.4 270.5,320.5 284.7,320.4 285.4,320.3 286.1,319.9 286.8,319.3 287.5,319.5 288.2,319.4 288.9,320.0 289.6,320.3 293.8,320.3 294.5,320.2 295.2,319.9 296.0,319.0 296.7,318.1 297.4,318.2 298.1,317.7 298.8,318.3 299.5,319.7 300.2,320.1 300.9,320.2 301.6,320.2 302.3,319.9 303.0,319.2 303.7,318.8 304.4,319.5 305.1,320.0 305.8,319.8 306.5,319.2 307.2,319.4 308.0,320.0 308.7,320.3 309.4,320.4 315.0,320.3 315.7,320.1 316.4,319.5 317.1,318.7 317.8,318.4 318.5,317.9 319.2,318.1 320.0,317.3 320.7,319.2 321.4,320.1 322.1,320.3 322.8,320.4 323.5,320.5 324.2,320.7 324.9,320.6 325.6,320.5 327.0,320.4 327.7,320.3 328.4,320.1 329.1,319.3 329.8,317.6 330.5,318.4 331.2,317.8 332.0,318.0 332.7,317.7 333.4,319.6 334.1,320.2 334.8,320.3 336.2,320.4 341.1,320.3 341.8,320.2 342.5,319.3 343.2,318.3 344.0,322.6 344.7,324.7 345.4,322.2 346.1,321.2 346.8,319.6 347.5,317.8 348.2,319.2 348.9,319.9 349.6,319.9 350.3,319.2 351.0,317.4 351.7,315.7 352.4,316.3 353.1,315.6 353.8,314.1 354.5,316.4 355.2,318.9 355.9,319.8 356.7,320.1 357.4,320.2 358.8,320.3 360.9,320.4 361.6,320.5 362.3,320.6 363.0,320.8 363.7,320.6 364.4,320.5 367.2,320.5 367.9,320.7 368.7,320.6 369.4,320.4 370.1,320.0 370.8,318.4 371.5,317.5 372.2,317.5 372.9,318.1 373.6,317.9 374.3,319.4 375.0,320.3 375.7,320.5 376.4,321.0 377.1,321.6 377.8,321.4 378.5,321.3 379.2,320.9 379.9,320.6 381.4,320.5 385.6,320.5 386.3,320.6 387.0,320.9 387.7,321.1 388.4,320.9 389.1,320.5 389.8,320.2 390.5,319.9 391.2,319.6 391.9,319.8 392.7,320.2 393.4,320.4 394.8,320.4 400.4,320.4 401.1,320.2 401.8,319.8 402.5,319.2 403.2,319.5 403.9,320.0 404.7,320.1 405.4,319.8 406.1,319.6 406.8,319.9 407.5,320.3 408.2,320.4 416.7,320.3 417.4,320.1 418.1,319.1 418.8,318.7 419.5,318.4 420.2,319.2 420.9,319.2 421.6,319.9 422.3,320.3 424.4,320.3 425.1,320.1 425.8,320.0 426.5,319.9 427.2,320.0 427.9,320.2 428.7,320.3 429.4,320.4 438.5,320.3 439.2,320.1 439.9,319.5 440.6,318.8 441.4,318.2 442.1,317.9 442.8,318.8 443.5,319.8 444.2,320.1 444.9,319.9 445.6,319.4 446.3,319.3 447.0,319.7 447.7,319.8 448.4,319.6 449.1,319.9 449.8,320.3 450.5,320.4 453.4,320.5 458.3,320.6 459.0,320.8 459.7,320.9 460.4,320.8 461.1,320.6 462.5,320.5 466.1,320.4 467.5,320.3 468.9,320.4 471.7,320.5 472.4,320.6 473.1,320.7 473.8,321.0 474.5,321.0 475.2,320.7 475.9,320.5 477.4,320.4 478.1,320.4 480.9,320.5 483.7,320.4 484.4,320.2 485.1,320.1 485.8,320.2 486.5,320.4 487.2,320.4 499.2,320.5 500.6,320.6 503.5,320.5 507.7,320.4 508.4,320.4 509.1,320.2 509.8,320.1 510.5,320.2 511.2,320.4 511.9,320.4 516.9,320.4 517.6,320.3 518.3,320.2 519.0,320.3 519.7,320.5 520.4,320.7 521.1,321.0 521.8,322.7 522.5,325.0 523.2,322.7 523.9,321.0 524.6,320.7 525.3,320.6 526.1,320.5 526.8,320.3 527.5,320.1 528.2,319.9 528.9,320.0 529.6,320.2 530.3,320.3 531.0,320.3 531.7,320.2 532.4,319.9 533.1,319.3 533.8,318.9 534.5,319.1 535.2,319.4 535.9,319.1 536.6,318.9 537.3,319.3 538.1,319.9 538.8,320.2 539.5,320.3 541.6,320.4 547.9,320.4 548.6,320.2 549.3,320.1 550.1,320.2 550.8,320.4 555.0,320.4 555.7,320.2 556.4,320.1 557.1,320.2 557.8,320.4 558.5,320.4 561.3,320.5 562.1,320.6 562.8,320.9 563.5,321.2 564.2,320.9 564.9,320.6 566.3,320.5 571.9,320.4 573.3,320.3 574.8,320.4 583.2,320.4 583.9,320.2 584.6,320.1 585.3,320.2 586.1,320.4 591.0,320.4 591.7,320.3 592.4,320.2 593.8,320.2 594.5,320.3 595.2,320.4 597.3,320.5 602.3,320.3 605.1,320.4 612.2,320.4 612.9,320.3 613.6,320.2 614.3,320.1 615.0,320.2 615.7,320.3 617.1,320.3 617.8,320.2 618.5,320.1 619.2,320.2 619.9,320.4 620.6,320.4 625.6,320.5 627.0,320.6 627.7,320.9 628.4,321.2 629.1,320.9 629.8,320.6 631.2,320.5 633.3,320.4 636.2,320.5 637.6,320.5 638.3,320.6 639.0,320.8 639.7,320.9 640.4,320.8 641.1,320.6 641.8,320.5 646.8,320.5 647.5,320.4 648.2,320.4 648.9,320.2 649.6,320.1 650.3,320.2 651.0,320.3 652.4,320.4 653.1,320.4 653.8,320.3 654.5,320.1 655.2,319.9 655.9,320.1 656.6,320.3 657.3,320.4 663.7,320.3 665.1,320.4 667.2,320.5 672.2,320.4 673.6,320.3 675.0,320.4 677.1,320.5 682.0,320.4 683.5,320.3 684.9,320.4 687.0,320.5 689.8,320.6 692.6,320.5 696.9,320.4 697.6,320.3 698.3,320.2 699.7,320.2 700.4,320.3 701.1,320.4 703.2,320.5 706.7,320.3 709.6,320.4 715.2,320.4 715.9,320.3 716.6,320.2 718.0,320.2 718.7,320.3 719.5,320.4 721.6,320.5 735.7,320.4 737.1,320.3 738.5,320.4 740.6,320.5 747.0,320.4 748.4,320.3 749.8,320.4 751.9,320.5 768.2,320.4 769.6,320.3 771.0,320.4 773.1,320.5 780.9,320.4 782.3,320.3 783.7,320.4 785.8,320.5 792.2,320.4 793.6,320.3 795.0,320.4 797.1,320.5 806.3,320.4 807.7,320.3 809.1,320.4 811.2,320.5 820.4,320.4 821.8,320.3 823.2,320.4 825.3,320.5 906.0,320.5" fill="none" stroke="#ff00ff" stroke-width="1" shape-rendering="crispEdges"/><rect x="59.5" y="118.5" width="847" height="237" fill="none" stroke="#000" shape-rendering="crispEdges"/></svg><div style="position:absolute;left:38px;top:2.84px;font-size:12px;line-height:1;white-space:nowrap;letter-spacing:0.2px">Int.</div><div style="position:absolute;right:874.7px;top:161.84px;font-size:12px;line-height:1;white-space:nowrap;letter-spacing:0.2px">0</div><div style="position:absolute;right:874.7px;top:134.84px;font-size:12px;line-height:1;white-space:nowrap;letter-spacing:0.2px">100</div><div style="position:absolute;right:874.7px;top:107.84px;font-size:12px;line-height:1;white-space:nowrap;letter-spacing:0.2px">200</div><div style="position:absolute;right:874.7px;top:80.84px;font-size:12px;line-height:1;white-space:nowrap;letter-spacing:0.2px">300</div><div style="position:absolute;right:874.7px;top:53.84px;font-size:12px;line-height:1;white-space:nowrap;letter-spacing:0.2px">400</div><div style="position:absolute;right:874.7px;top:26.84px;font-size:12px;line-height:1;white-space:nowrap;letter-spacing:0.2px">500</div><div style="position:absolute;left:75.58333333333334px;width:100px;text-align:center;top:266.24px;font-size:12px;line-height:1;white-space:nowrap;letter-spacing:0.2px">10</div><div style="position:absolute;left:216.75px;width:100px;text-align:center;top:266.24px;font-size:12px;line-height:1;white-space:nowrap;letter-spacing:0.2px">20</div><div style="position:absolute;left:357.9166666666667px;width:100px;text-align:center;top:266.24px;font-size:12px;line-height:1;white-space:nowrap;letter-spacing:0.2px">30</div><div style="position:absolute;left:499.08333333333337px;width:100px;text-align:center;top:266.24px;font-size:12px;line-height:1;white-space:nowrap;letter-spacing:0.2px">40</div><div style="position:absolute;left:640.25px;width:100px;text-align:center;top:266.24px;font-size:12px;line-height:1;white-space:nowrap;letter-spacing:0.2px">50</div><div style="position:absolute;left:781.4166666666667px;width:100px;text-align:center;top:266.24px;font-size:12px;line-height:1;white-space:nowrap;letter-spacing:0.2px">60</div><div style="position:absolute;left:458px;top:280.84px;font-size:12px;line-height:1;white-space:nowrap;letter-spacing:0.2px">2Theta</div></div>
<div style="position:absolute;left:4px;top:398px;width:919px;height:3px;background:#f5f5f5"></div>
<div style="position:absolute;left:4px;top:401px;width:919px;height:411px;background:#fff;box-sizing:border-box;border:1px solid #a0a0a0;overflow:hidden"><svg style="position:absolute;left:0;top:0" width="917" height="409" viewBox="5 402 917 409"><defs><radialGradient id="gC" cx="0.56" cy="0.36" r="0.68"><stop offset="0" stop-color="#e4e4e4"/><stop offset="0.3" stop-color="#989898"/><stop offset="1" stop-color="#747474"/></radialGradient><radialGradient id="gO" cx="0.56" cy="0.36" r="0.68"><stop offset="0" stop-color="#ff8080"/><stop offset="0.3" stop-color="#ff0000"/><stop offset="1" stop-color="#c00000"/></radialGradient><radialGradient id="gS" cx="0.56" cy="0.36" r="0.68"><stop offset="0" stop-color="#ffffa0"/><stop offset="0.3" stop-color="#ffff00"/><stop offset="1" stop-color="#c8c800"/></radialGradient><radialGradient id="gN" cx="0.56" cy="0.36" r="0.68"><stop offset="0" stop-color="#6060ff"/><stop offset="0.3" stop-color="#0000ff"/><stop offset="1" stop-color="#0000b0"/></radialGradient><radialGradient id="gH" cx="0.56" cy="0.36" r="0.68"><stop offset="0" stop-color="#ffffff"/><stop offset="0.3" stop-color="#f0f0f0"/><stop offset="1" stop-color="#a0a0a0"/></radialGradient><g id="m"><path d="M22.7 5.2L11.4 2.6M16.4 -18.3L8.2 -19.2M16.4 -18.3L12.5 -14.4M8.6 -10.5L12.5 -14.4M8.6 -10.5L0.3 -8.0M8.6 -10.5L15.6 -2.6M22.7 5.2L15.6 -2.6M16.4 -18.3L22.7 -10.7M29.0 -3.1L22.7 -10.7M29.0 -3.1L25.9 1.0M22.7 5.2L25.9 1.0M29.0 -3.1L37.6 -0.8M46.3 1.6L37.6 -0.8M46.3 1.6L48.5 -1.7M46.3 1.6L52.5 8.6M58.8 15.7L52.5 8.6M58.8 15.7L55.7 19.9M52.5 24.1L55.7 19.9M58.8 15.7L68.0 18.3M77.1 20.9L68.0 18.3M22.7 5.2L28.5 12.0M34.2 18.8L28.5 12.0M34.2 18.8L43.4 21.5M52.5 24.1L43.4 21.5M34.2 18.8L31.3 24.1M28.5 29.3L31.3 24.1M28.5 29.3L23.7 23.7M28.5 29.3L37.6 31.9M46.8 34.5L37.6 31.9M46.8 34.5L49.7 29.3M52.5 24.1L49.7 29.3M46.8 34.5L45.7 42.1M46.8 34.5L54.6 35.8M52.5 24.1L57.5 30.6M75.6 38.7L69.0 37.9M77.1 20.9L85.2 23.8M93.3 26.7L85.2 23.8M77.1 20.9L76.3 29.8M75.6 38.7L76.3 29.8M77.1 20.9L79.9 14.4M93.3 26.7L92.6 21.3M93.3 26.7L100.9 26.3M93.3 26.7L91.5 34.0M75.6 38.7L82.6 40.0M75.6 38.7L74.5 45.8M28.5 29.3L22.7 38.7M17.0 48.1L22.7 38.7M17.0 48.1L10.7 47.1M4.4 46.0L10.7 47.1M4.4 46.0L2.3 40.6M4.4 46.0L2.6 45.2" stroke="#b8b8b8" stroke-width="2.7" stroke-linecap="round" fill="none"/><path d="M-18.1 24.9L-12.3 20.6M6.0 25.1L-0.3 20.7M-8.0 -5.4L0.3 -8.0M50.7 -5.0L48.5 -1.7M18.8 18.0L23.7 23.7M44.7 49.7L45.7 42.1M62.5 37.1L54.6 35.8M62.5 37.1L57.5 30.6M62.5 37.1L69.0 37.9M82.7 7.8L79.9 14.4M91.8 15.9L92.6 21.3M108.5 26.0L100.9 26.3M89.7 41.3L91.5 34.0M89.7 41.3L82.6 40.0M73.5 52.8L74.5 45.8M0.2 35.1L2.3 40.6M0.8 44.4L2.6 45.2" stroke="#f0f0f0" stroke-width="2.7" stroke-linecap="round" fill="none"/><path d="M0.0 -20.1L0.0 -10.0M-14.1 0.3L-7.1 0.2M0.0 -20.1L8.2 -19.2" stroke="#c0c0c0" stroke-width="2.7" stroke-linecap="round" fill="none"/><path d="M0.0 0.0L0.0 -10.0M0.0 0.0L-7.1 0.2M0.0 0.0L-3.3 8.1M0.0 0.0L11.4 2.6" stroke="#c8c8c8" stroke-width="2.7" stroke-linecap="round" fill="none"/><path d="M-6.6 16.2L-3.3 8.1M-6.6 16.2L-12.3 20.6M-6.6 16.2L-0.3 20.7" stroke="#c8c8c8" stroke-width="2.7" stroke-linecap="round" fill="none"/><circle cx="-18.1" cy="24.9" r="1.35" fill="#f4f4f4"/><circle cx="6.0" cy="25.1" r="1.35" fill="#f4f4f4"/><circle cx="10.7" cy="-21.1" r="1.35" fill="#f4f4f4"/><circle cx="-8.0" cy="-5.4" r="1.35" fill="#f4f4f4"/><circle cx="50.7" cy="-5.0" r="1.35" fill="#f4f4f4"/><circle cx="18.8" cy="18.0" r="1.35" fill="#f4f4f4"/><circle cx="44.7" cy="49.7" r="1.35" fill="#f4f4f4"/><circle cx="82.7" cy="7.8" r="1.35" fill="#f4f4f4"/><circle cx="91.8" cy="15.9" r="1.35" fill="#f4f4f4"/><circle cx="108.5" cy="26.0" r="1.35" fill="#f4f4f4"/><circle cx="89.7" cy="41.3" r="1.35" fill="#f4f4f4"/><circle cx="73.5" cy="52.8" r="1.35" fill="#f4f4f4"/><circle cx="62.5" cy="37.1" r="1.35" fill="#f4f4f4"/><circle cx="0.2" cy="35.1" r="1.35" fill="#f4f4f4"/><circle cx="0.8" cy="44.4" r="1.35" fill="#f4f4f4"/><circle cx="0.0" cy="0.0" r="3.4" fill="url(#gS)"/><circle cx="0.0" cy="-20.1" r="3.4" fill="url(#gO)"/><circle cx="-14.1" cy="0.3" r="3.4" fill="url(#gO)"/><circle cx="-6.6" cy="16.2" r="3.4" fill="url(#gN)"/><circle cx="16.4" cy="-18.3" r="3.35" fill="url(#gC)"/><circle cx="8.6" cy="-10.5" r="3.35" fill="url(#gC)"/><circle cx="29.0" cy="-3.1" r="3.35" fill="url(#gC)"/><circle cx="22.7" cy="5.2" r="3.35" fill="url(#gC)"/><circle cx="46.3" cy="1.6" r="3.35" fill="url(#gC)"/><circle cx="58.8" cy="15.7" r="3.35" fill="url(#gC)"/><circle cx="34.2" cy="18.8" r="3.35" fill="url(#gC)"/><circle cx="52.5" cy="24.1" r="3.35" fill="url(#gC)"/><circle cx="28.5" cy="29.3" r="3.35" fill="url(#gC)"/><circle cx="46.8" cy="34.5" r="3.35" fill="url(#gC)"/><circle cx="77.1" cy="20.9" r="3.35" fill="url(#gC)"/><circle cx="93.3" cy="26.7" r="3.35" fill="url(#gC)"/><circle cx="75.6" cy="38.7" r="3.35" fill="url(#gC)"/><circle cx="17.0" cy="48.1" r="3.35" fill="url(#gC)"/><circle cx="4.4" cy="46.0" r="2.3" fill="#d4d4d4"/></g><g id="m2"><path d="M22.7 5.2L11.4 2.6M16.4 -18.3L8.2 -19.2M16.4 -18.3L12.5 -14.4M8.6 -10.5L12.5 -14.4M8.6 -10.5L0.3 -8.0M8.6 -10.5L15.6 -2.6M22.7 5.2L15.6 -2.6M16.4 -18.3L22.7 -10.7M29.0 -3.1L22.7 -10.7M29.0 -3.1L25.9 1.0M22.7 5.2L25.9 1.0M29.0 -3.1L37.6 -0.8M46.3 1.6L37.6 -0.8M46.3 1.6L48.5 -1.7M46.3 1.6L52.5 8.6M58.8 15.7L52.5 8.6M58.8 15.7L55.7 19.9M52.5 24.1L55.7 19.9M58.8 15.7L68.0 18.3M77.1 20.9L68.0 18.3M22.7 5.2L28.5 12.0M34.2 18.8L28.5 12.0M34.2 18.8L43.4 21.5M52.5 24.1L43.4 21.5M34.2 18.8L31.3 24.1M28.5 29.3L31.3 24.1M28.5 29.3L23.7 23.7M28.5 29.3L37.6 31.9M46.8 34.5L37.6 31.9M46.8 34.5L49.7 29.3M52.5 24.1L49.7 29.3M46.8 34.5L45.7 42.1M46.8 34.5L54.6 35.8M52.5 24.1L57.5 30.6M75.6 38.7L69.0 37.9M77.1 20.9L85.2 23.8M93.3 26.7L85.2 23.8M77.1 20.9L76.3 29.8M75.6 38.7L76.3 29.8M77.1 20.9L79.9 14.4M93.3 26.7L92.6 21.3M93.3 26.7L100.9 26.3M93.3 26.7L91.5 34.0M75.6 38.7L82.6 40.0M75.6 38.7L74.5 45.8M28.5 29.3L22.7 38.7M17.0 48.1L22.7 38.7M17.0 48.1L10.7 47.1M4.4 46.0L10.7 47.1M4.4 46.0L2.3 40.6M4.4 46.0L2.6 45.2" stroke="#b8b8b8" stroke-width="2.7" stroke-linecap="round" fill="none"/><path d="M-18.1 24.9L-12.3 20.6M6.0 25.1L-0.3 20.7M-8.0 -5.4L0.3 -8.0M50.7 -5.0L48.5 -1.7M18.8 18.0L23.7 23.7M44.7 49.7L45.7 42.1M62.5 37.1L54.6 35.8M62.5 37.1L57.5 30.6M62.5 37.1L69.0 37.9M82.7 7.8L79.9 14.4M91.8 15.9L92.6 21.3M108.5 26.0L100.9 26.3M89.7 41.3L91.5 34.0M89.7 41.3L82.6 40.0M73.5 52.8L74.5 45.8M0.2 35.1L2.3 40.6M0.8 44.4L2.6 45.2" stroke="#f0f0f0" stroke-width="2.7" stroke-linecap="round" fill="none"/><path d="M0.0 -20.1L0.0 -10.0M-14.1 0.3L-7.1 0.2M0.0 -20.1L8.2 -19.2" stroke="#c0c0c0" stroke-width="2.7" stroke-linecap="round" fill="none"/><path d="M0.0 0.0L0.0 -10.0M0.0 0.0L-7.1 0.2M0.0 0.0L-3.3 8.1M0.0 0.0L11.4 2.6" stroke="#c8c8c8" stroke-width="2.7" stroke-linecap="round" fill="none"/><path d="M-6.6 16.2L-3.3 8.1M-6.6 16.2L-12.3 20.6M-6.6 16.2L-0.3 20.7" stroke="#c8c8c8" stroke-width="2.7" stroke-linecap="round" fill="none"/><circle cx="-18.1" cy="24.9" r="1.35" fill="#f4f4f4"/><circle cx="6.0" cy="25.1" r="1.35" fill="#f4f4f4"/><circle cx="10.7" cy="-21.1" r="1.35" fill="#f4f4f4"/><circle cx="-8.0" cy="-5.4" r="1.35" fill="#f4f4f4"/><circle cx="50.7" cy="-5.0" r="1.35" fill="#f4f4f4"/><circle cx="18.8" cy="18.0" r="1.35" fill="#f4f4f4"/><circle cx="44.7" cy="49.7" r="1.35" fill="#f4f4f4"/><circle cx="82.7" cy="7.8" r="1.35" fill="#f4f4f4"/><circle cx="91.8" cy="15.9" r="1.35" fill="#f4f4f4"/><circle cx="108.5" cy="26.0" r="1.35" fill="#f4f4f4"/><circle cx="89.7" cy="41.3" r="1.35" fill="#f4f4f4"/><circle cx="73.5" cy="52.8" r="1.35" fill="#f4f4f4"/><circle cx="62.5" cy="37.1" r="1.35" fill="#f4f4f4"/><circle cx="0.2" cy="35.1" r="1.35" fill="#f4f4f4"/><circle cx="0.8" cy="44.4" r="1.35" fill="#f4f4f4"/><circle cx="0.0" cy="0.0" r="3.4" fill="url(#gS)"/><circle cx="0.0" cy="-20.1" r="3.4" fill="url(#gO)"/><circle cx="-14.1" cy="0.3" r="3.4" fill="url(#gO)"/><circle cx="-6.6" cy="16.2" r="3.4" fill="url(#gN)"/><circle cx="16.4" cy="-18.3" r="3.35" fill="url(#gC)"/><circle cx="8.6" cy="-10.5" r="3.35" fill="url(#gC)"/><circle cx="29.0" cy="-3.1" r="3.35" fill="url(#gC)"/><circle cx="22.7" cy="5.2" r="3.35" fill="url(#gC)"/><circle cx="46.3" cy="1.6" r="3.35" fill="url(#gC)"/><circle cx="58.8" cy="15.7" r="3.35" fill="url(#gC)"/><circle cx="34.2" cy="18.8" r="3.35" fill="url(#gC)"/><circle cx="52.5" cy="24.1" r="3.35" fill="url(#gC)"/><circle cx="28.5" cy="29.3" r="3.35" fill="url(#gC)"/><circle cx="46.8" cy="34.5" r="3.35" fill="url(#gC)"/><circle cx="77.1" cy="20.9" r="3.35" fill="url(#gC)"/><circle cx="93.3" cy="26.7" r="3.35" fill="url(#gC)"/><circle cx="75.6" cy="38.7" r="3.35" fill="url(#gC)"/><circle cx="17.0" cy="48.1" r="2.3" fill="#d4d4d4"/><circle cx="4.4" cy="46.0" r="3.35" fill="url(#gC)"/></g><path id="lk" d="M4.4 46.0L-5.6 64.6" stroke="#b8b8b8" stroke-width="2.7" stroke-linecap="round"/><g id="h13"><path d="M17.0 48.1L19.8 54.0" stroke="#b8b8b8" stroke-width="2.7" stroke-linecap="round"/><path d="M19.8 54.0L22.6 60.0" stroke="#f0f0f0" stroke-width="2.7" stroke-linecap="round"/><circle cx="17.0" cy="48.1" r="3.35" fill="url(#gC)"/></g><g id="h13r"><path d="M17.0 48.1L22.6 60.0" stroke="#f0f0f0" stroke-width="2.7" stroke-linecap="round"/></g></defs><rect x="6" y="403" width="915" height="407" fill="#000"/><path d="M172.4 772.0h496M216.4 606.2h496M260.3 440.4h496M172.4 772.0l87.9 -331.6M420.4 772.0l87.9 -331.6M668.4 772.0l87.9 -331.6" stroke="#fff" stroke-width="1" fill="none"/><use href="#h13" x="276.6" y="468.4"/><use href="#m" x="276.6" y="468.4"/><use href="#lk" x="276.6" y="468.4"/><use href="#m2" transform="translate(470.0 495.3) rotate(180)"/><use href="#h13" x="254.6" y="551.3"/><use href="#m" x="254.6" y="551.3"/><use href="#lk" x="254.6" y="551.3"/><use href="#m2" transform="translate(448.0 578.2) rotate(180)"/><use href="#h13r" transform="translate(448.0 578.2) rotate(180)"/><use href="#lk" transform="translate(448.0 578.2) rotate(180)"/><use href="#h13" x="232.6" y="634.2"/><use href="#m" x="232.6" y="634.2"/><use href="#lk" x="232.6" y="634.2"/><use href="#m2" transform="translate(426.0 661.1) rotate(180)"/><use href="#h13r" transform="translate(426.0 661.1) rotate(180)"/><use href="#lk" transform="translate(426.0 661.1) rotate(180)"/><use href="#m" x="210.6" y="717.1"/><use href="#m2" transform="translate(404.0 744.0) rotate(180)"/><use href="#h13r" transform="translate(404.0 744.0) rotate(180)"/><use href="#lk" transform="translate(404.0 744.0) rotate(180)"/><use href="#h13" x="524.6" y="468.4"/><use href="#m" x="524.6" y="468.4"/><use href="#lk" x="524.6" y="468.4"/><use href="#m2" transform="translate(718.0 495.3) rotate(180)"/><use href="#h13" x="502.6" y="551.3"/><use href="#m" x="502.6" y="551.3"/><use href="#lk" x="502.6" y="551.3"/><use href="#m2" transform="translate(696.0 578.2) rotate(180)"/><use href="#h13r" transform="translate(696.0 578.2) rotate(180)"/><use href="#lk" transform="translate(696.0 578.2) rotate(180)"/><use href="#h13" x="480.6" y="634.2"/><use href="#m" x="480.6" y="634.2"/><use href="#lk" x="480.6" y="634.2"/><use href="#m2" transform="translate(674.0 661.1) rotate(180)"/><use href="#h13r" transform="translate(674.0 661.1) rotate(180)"/><use href="#lk" transform="translate(674.0 661.1) rotate(180)"/><use href="#m" x="458.6" y="717.1"/><use href="#m2" transform="translate(652.0 744.0) rotate(180)"/><use href="#h13r" transform="translate(652.0 744.0) rotate(180)"/><use href="#lk" transform="translate(652.0 744.0) rotate(180)"/><circle cx="321.0" cy="445.1" r="1.4" fill="#f4f4f4"/><circle cx="360.4" cy="767" r="1.4" fill="#f4f4f4"/><circle cx="569.0" cy="445.1" r="1.4" fill="#f4f4f4"/><circle cx="608.4" cy="767" r="1.4" fill="#f4f4f4"/><path d="M34 459.5H62.5L70.3 431" stroke="#b8b8b8" stroke-width="1" fill="none"/><path d="M25 459.5l11-3.3v6.6zM72.3 423.2l.8 11-6.5-2.3z" fill="#f0f0f0"/><text x="74.3" y="414.8" font-size="10.5" fill="#d8d8d8" font-family="Liberation Sans">c</text><text x="14.5" y="458.7" font-size="10.5" fill="#d8d8d8" font-family="Liberation Sans">a</text><rect x="875.7" y="694.7" width="44" height="114" rx="2.5" fill="#000" stroke="#888888" stroke-width="2"/><circle cx="886" cy="705.6" r="8.9" fill="url(#gC)"/><text x="895.5" y="709.4" font-size="11" fill="#e8e8e8" font-family="Liberation Sans" letter-spacing="0.3">C+0</text><circle cx="886" cy="728.6" r="8.9" fill="url(#gH)"/><text x="895.5" y="732.4" font-size="11" fill="#e8e8e8" font-family="Liberation Sans" letter-spacing="0.3">H+0</text><circle cx="886" cy="751.6" r="8.9" fill="url(#gN)"/><text x="895.5" y="755.4" font-size="11" fill="#e8e8e8" font-family="Liberation Sans" letter-spacing="0.3">N+0</text><circle cx="886" cy="774.6" r="8.9" fill="url(#gO)"/><text x="895.5" y="778.4" font-size="11" fill="#e8e8e8" font-family="Liberation Sans" letter-spacing="0.3">O+0</text><circle cx="886" cy="797.6" r="8.9" fill="url(#gS)"/><text x="895.5" y="801.4" font-size="11" fill="#e8e8e8" font-family="Liberation Sans" letter-spacing="0.3">S+0</text></svg></div>
<div style="position:absolute;left:923px;top:101px;width:3px;height:711px;background:#f5f5f5"></div>
<div style="position:absolute;left:926px;top:101px;width:549px;height:204px;background:#fff;box-sizing:border-box;border:1px solid #a0a0a0"><div style="position:absolute;left:59px;top:0;width:1px;height:201px;background:#f0f0f0"></div><div style="position:absolute;left:91px;top:0;width:1px;height:201px;background:#f0f0f0"></div><div style="position:absolute;left:125px;top:0;width:1px;height:201px;background:#f0f0f0"></div><div style="position:absolute;left:177px;top:0;width:1px;height:201px;background:#f0f0f0"></div><div style="position:absolute;left:258px;top:0;width:1px;height:201px;background:#f0f0f0"></div><div style="position:absolute;left:298px;top:0;width:1px;height:201px;background:#f0f0f0"></div><div style="position:absolute;left:378px;top:0;width:1px;height:201px;background:#f0f0f0"></div><div style="position:absolute;left:462px;top:0;width:1px;height:201px;background:#f0f0f0"></div><div style="position:absolute;left:543px;top:0;width:1px;height:201px;background:#f0f0f0"></div><div style="position:absolute;left:0;top:43px;width:544px;height:1px;background:#f0f0f0"></div><div style="position:absolute;left:0;top:62px;width:544px;height:1px;background:#f0f0f0"></div><div style="position:absolute;left:0;top:81px;width:544px;height:1px;background:#f0f0f0"></div><div style="position:absolute;left:0;top:100px;width:544px;height:1px;background:#f0f0f0"></div><div style="position:absolute;left:0;top:119px;width:544px;height:1px;background:#f0f0f0"></div><div style="position:absolute;left:0;top:138px;width:544px;height:1px;background:#f0f0f0"></div><div style="position:absolute;left:0;top:157px;width:544px;height:1px;background:#f0f0f0"></div><div style="position:absolute;left:0;top:176px;width:544px;height:1px;background:#f0f0f0"></div><div style="position:absolute;left:0;top:195px;width:544px;height:1px;background:#f0f0f0"></div><div style="position:absolute;left:59px;top:0;width:1px;height:24px;background:#e5e5e5"></div><div style="position:absolute;left:91px;top:0;width:1px;height:24px;background:#e5e5e5"></div><div style="position:absolute;left:125px;top:0;width:1px;height:24px;background:#e5e5e5"></div><div style="position:absolute;left:177px;top:0;width:1px;height:24px;background:#e5e5e5"></div><div style="position:absolute;left:258px;top:0;width:1px;height:24px;background:#e5e5e5"></div><div style="position:absolute;left:298px;top:0;width:1px;height:24px;background:#e5e5e5"></div><div style="position:absolute;left:378px;top:0;width:1px;height:24px;background:#e5e5e5"></div><div style="position:absolute;left:462px;top:0;width:1px;height:24px;background:#e5e5e5"></div><div style="position:absolute;left:543px;top:0;width:1px;height:24px;background:#e5e5e5"></div><div style="position:absolute;top:8.27px;font-size:11.5px;line-height:1;white-space:nowrap;color:#000;letter-spacing:0.174px;left:7px;">Cfg. no.</div><div style="position:absolute;top:8.27px;font-size:11.5px;line-height:1;white-space:nowrap;color:#000;letter-spacing:-0.500px;right:461.70000000000005px;">ID</div><div style="position:absolute;top:8.27px;font-size:11.5px;line-height:1;white-space:nowrap;color:#000;letter-spacing:-0.273px;left:98px;">P-...</div><div style="position:absolute;top:8.27px;font-size:11.5px;line-height:1;white-space:nowrap;color:#000;letter-spacing:0.224px;left:131.5px;">Meth...</div><div style="position:absolute;top:8.27px;font-size:11.5px;line-height:1;white-space:nowrap;color:#000;letter-spacing:-0.080px;right:294.79999999999995px;">CF-Balance</div><div style="position:absolute;top:8.27px;font-size:11.5px;line-height:1;white-space:nowrap;color:#000;letter-spacing:-0.620px;right:255px;">Seed</div><div style="position:absolute;top:8.27px;font-size:11.5px;line-height:1;white-space:nowrap;color:#000;letter-spacing:0.138px;right:175px;">R-factor (%)</div><div style="position:absolute;top:8.27px;font-size:11.5px;line-height:1;white-space:nowrap;color:#000;letter-spacing:0.365px;right:91px;">Cost function</div><div style="position:absolute;top:8.27px;font-size:11.5px;line-height:1;white-space:nowrap;color:#000;letter-spacing:0.208px;right:10px;">Calc. time</div><div style="position:absolute;left:299px;top:25px;width:79px;height:18px;background:#f0a0e0"></div><div style="position:absolute;top:30.27px;font-size:11.5px;line-height:1;white-space:nowrap;color:#000;left:22.5px;">1</div><div style="position:absolute;top:30.27px;font-size:11.5px;line-height:1;white-space:nowrap;color:#000;right:462px;">1</div><div style="position:absolute;top:30.27px;font-size:11.5px;line-height:1;white-space:nowrap;color:#000;right:428px;">0</div><div style="position:absolute;top:30.27px;font-size:11.5px;line-height:1;white-space:nowrap;color:#000;letter-spacing:0.125px;left:131.5px;">Glob.</div><div style="position:absolute;top:30.27px;font-size:11.5px;line-height:1;white-space:nowrap;color:#000;letter-spacing:-0.297px;right:295px;">0.50</div><div style="position:absolute;top:30.27px;font-size:11.5px;line-height:1;white-space:nowrap;color:#000;right:255px;">4</div><div style="position:absolute;top:30.27px;font-size:11.5px;line-height:1;white-space:nowrap;color:#000;letter-spacing:-0.320px;right:175px;">46.39</div><div style="position:absolute;top:30.27px;font-size:11.5px;line-height:1;white-space:nowrap;color:#000;letter-spacing:-0.263px;right:91px;">4.77504</div><div style="position:absolute;top:30.27px;font-size:11.5px;line-height:1;white-space:nowrap;color:#000;letter-spacing:-0.324px;right:10px;">00:04:28</div><div style="position:absolute;left:299px;top:44px;width:79px;height:18px;background:#f0a0c0"></div><div style="position:absolute;top:49.27px;font-size:11.5px;line-height:1;white-space:nowrap;color:#000;left:22.5px;">2</div><div style="position:absolute;top:49.27px;font-size:11.5px;line-height:1;white-space:nowrap;color:#000;right:462px;">2</div><div style="position:absolute;top:49.27px;font-size:11.5px;line-height:1;white-space:nowrap;color:#000;right:428px;">0</div><div style="position:absolute;top:49.27px;font-size:11.5px;line-height:1;white-space:nowrap;color:#000;letter-spacing:0.125px;left:131.5px;">Glob.</div><div style="position:absolute;top:49.27px;font-size:11.5px;line-height:1;white-space:nowrap;color:#000;letter-spacing:-0.297px;right:295px;">0.50</div><div style="position:absolute;top:49.27px;font-size:11.5px;line-height:1;white-space:nowrap;color:#000;right:255px;">1</div><div style="position:absolute;top:49.27px;font-size:11.5px;line-height:1;white-space:nowrap;color:#000;letter-spacing:-0.320px;right:175px;">39.40</div><div style="position:absolute;top:49.27px;font-size:11.5px;line-height:1;white-space:nowrap;color:#000;letter-spacing:-0.263px;right:91px;">3.97346</div><div style="position:absolute;top:49.27px;font-size:11.5px;line-height:1;white-space:nowrap;color:#000;letter-spacing:-0.324px;right:10px;">00:04:40</div><div style="position:absolute;left:299px;top:63px;width:79px;height:18px;background:#f0a0e0"></div><div style="position:absolute;top:68.27px;font-size:11.5px;line-height:1;white-space:nowrap;color:#000;left:22.5px;">3</div><div style="position:absolute;top:68.27px;font-size:11.5px;line-height:1;white-space:nowrap;color:#000;right:462px;">3</div><div style="position:absolute;top:68.27px;font-size:11.5px;line-height:1;white-space:nowrap;color:#000;right:428px;">0</div><div style="position:absolute;top:68.27px;font-size:11.5px;line-height:1;white-space:nowrap;color:#000;letter-spacing:0.125px;left:131.5px;">Glob.</div><div style="position:absolute;top:68.27px;font-size:11.5px;line-height:1;white-space:nowrap;color:#000;letter-spacing:-0.297px;right:295px;">0.50</div><div style="position:absolute;top:68.27px;font-size:11.5px;line-height:1;white-space:nowrap;color:#000;right:255px;">5</div><div style="position:absolute;top:68.27px;font-size:11.5px;line-height:1;white-space:nowrap;color:#000;letter-spacing:-0.320px;right:175px;">46.72</div><div style="position:absolute;top:68.27px;font-size:11.5px;line-height:1;white-space:nowrap;color:#000;letter-spacing:-0.120px;right:91px;">4.81159</div><div style="position:absolute;top:68.27px;font-size:11.5px;line-height:1;white-space:nowrap;color:#000;letter-spacing:-0.324px;right:10px;">00:04:43</div><div style="position:absolute;left:299px;top:82px;width:79px;height:18px;background:#f0a0e0"></div><div style="position:absolute;top:87.27px;font-size:11.5px;line-height:1;white-space:nowrap;color:#000;left:22.5px;">4</div><div style="position:absolute;top:87.27px;font-size:11.5px;line-height:1;white-space:nowrap;color:#000;right:462px;">4</div><div style="position:absolute;top:87.27px;font-size:11.5px;line-height:1;white-space:nowrap;color:#000;right:428px;">0</div><div style="position:absolute;top:87.27px;font-size:11.5px;line-height:1;white-space:nowrap;color:#000;letter-spacing:0.125px;left:131.5px;">Glob.</div><div style="position:absolute;top:87.27px;font-size:11.5px;line-height:1;white-space:nowrap;color:#000;letter-spacing:-0.297px;right:295px;">0.50</div><div style="position:absolute;top:87.27px;font-size:11.5px;line-height:1;white-space:nowrap;color:#000;right:255px;">2</div><div style="position:absolute;top:87.27px;font-size:11.5px;line-height:1;white-space:nowrap;color:#000;letter-spacing:-0.320px;right:175px;">46.39</div><div style="position:absolute;top:87.27px;font-size:11.5px;line-height:1;white-space:nowrap;color:#000;letter-spacing:-0.263px;right:91px;">4.84066</div><div style="position:absolute;top:87.27px;font-size:11.5px;line-height:1;white-space:nowrap;color:#000;letter-spacing:-0.324px;right:10px;">00:04:46</div><div style="position:absolute;left:5px;top:100px;width:16px;height:19px;background:#66aee8"></div><div style="position:absolute;left:21px;top:100px;width:522px;height:19px;background:#0078d7;box-sizing:border-box;border:1px dotted #c08040"></div><div style="position:absolute;left:59px;top:101px;width:1px;height:17px;background:#e4eefa"></div><div style="position:absolute;left:91px;top:101px;width:1px;height:17px;background:#e4eefa"></div><div style="position:absolute;left:125px;top:101px;width:1px;height:17px;background:#e4eefa"></div><div style="position:absolute;left:177px;top:101px;width:1px;height:17px;background:#e4eefa"></div><div style="position:absolute;left:258px;top:101px;width:1px;height:17px;background:#e4eefa"></div><div style="position:absolute;left:298px;top:101px;width:1px;height:17px;background:#e4eefa"></div><div style="position:absolute;left:378px;top:101px;width:1px;height:17px;background:#e4eefa"></div><div style="position:absolute;left:462px;top:101px;width:1px;height:17px;background:#e4eefa"></div><svg style="position:absolute;left:8px;top:103px" width="10" height="14" viewBox="0 0 10 14"><path d="M8.5 1.5L2.5 7l6 5.5z" fill="#10328c"/></svg><div style="position:absolute;top:106.27px;font-size:11.5px;line-height:1;white-space:nowrap;color:#fff;left:22px;">5</div><div style="position:absolute;top:106.27px;font-size:11.5px;line-height:1;white-space:nowrap;color:#fff;right:462px;">5</div><div style="position:absolute;top:106.27px;font-size:11.5px;line-height:1;white-space:nowrap;color:#fff;right:428px;">0</div><div style="position:absolute;top:106.27px;font-size:11.5px;line-height:1;white-space:nowrap;color:#fff;letter-spacing:0.125px;left:131.5px;">Glob.</div><div style="position:absolute;top:106.27px;font-size:11.5px;line-height:1;white-space:nowrap;color:#fff;letter-spacing:-0.297px;right:295px;">0.50</div><div style="position:absolute;top:106.27px;font-size:11.5px;line-height:1;white-space:nowrap;color:#fff;right:255px;">3</div><div style="position:absolute;top:106.27px;font-size:11.5px;line-height:1;white-space:nowrap;color:#fff;letter-spacing:-0.320px;right:175px;">19.08</div><div style="position:absolute;top:106.27px;font-size:11.5px;line-height:1;white-space:nowrap;color:#fff;letter-spacing:-0.263px;right:91px;">1.93569</div><div style="position:absolute;top:106.27px;font-size:11.5px;line-height:1;white-space:nowrap;color:#fff;letter-spacing:-0.324px;right:10px;">00:03:28</div></div>
<div style="position:absolute;left:926px;top:305px;width:549px;height:3px;background:#f5f5f5"></div>
<div style="position:absolute;left:926px;top:308px;width:549px;height:504px;background:#fff;box-sizing:border-box;border:1px solid #a0a0a0;overflow:hidden"><div style="position:absolute;left:2px;top:2.84px;font-size:12px;line-height:1;white-space:nowrap;letter-spacing:-0.188px;font-weight:bold;text-decoration:underline;text-underline-offset:1px;text-decoration-thickness:1px;">Bibliographic data</div><div style="position:absolute;left:2px;top:47.84px;font-size:12px;line-height:1;white-space:nowrap;letter-spacing:-0.109px;font-weight:bold;text-decoration:underline;text-underline-offset:1px;text-decoration-thickness:1px;">Crystal data</div><div style="position:absolute;left:2px;top:63.14px;font-size:12px;line-height:1;white-space:nowrap;letter-spacing:0.388px;">Formula sum</div><div style="position:absolute;left:194px;top:63.14px;font-size:12px;line-height:1;white-space:nowrap;letter-spacing:-0.276px;">C<span style="font-size:8px;letter-spacing:0">60</span> H<span style="font-size:8px;letter-spacing:0">100</span> N<span style="font-size:8px;letter-spacing:0">4</span> O<span style="font-size:8px;letter-spacing:0">8</span> S<span style="font-size:8px;letter-spacing:0">4</span></div><div style="position:absolute;left:2px;top:78.14px;font-size:12px;line-height:1;white-space:nowrap;letter-spacing:0.251px;">Formula weight</div><div style="position:absolute;left:194px;top:78.14px;font-size:12px;line-height:1;white-space:nowrap;letter-spacing:0.350px;">1133.74</div><div style="position:absolute;left:2px;top:93.14px;font-size:12px;line-height:1;white-space:nowrap;letter-spacing:0.132px;">Crystal system</div><div style="position:absolute;left:194px;top:93.14px;font-size:12px;line-height:1;white-space:nowrap;letter-spacing:0.355px;">monoclinic</div><div style="position:absolute;left:2px;top:108.14px;font-size:12px;line-height:1;white-space:nowrap;letter-spacing:0.164px;">Space group</div><div style="position:absolute;left:194px;top:108.14px;font-size:12px;line-height:1;white-space:nowrap;letter-spacing:-0.003px;"><i>P</i> 1 21/c 1 (no. 14)</div><div style="position:absolute;left:2px;top:123.14px;font-size:12px;line-height:1;white-space:nowrap;letter-spacing:0.278px;">Unit cell dimensions</div><div style="position:absolute;left:194px;top:123.14px;font-size:12px;line-height:1;white-space:nowrap;letter-spacing:-0.015px;"><i>a</i> = 16.9600 Å</div><div style="position:absolute;left:194px;top:138.14px;font-size:12px;line-height:1;white-space:nowrap;letter-spacing:0.054px;"><i>b</i> = 8.1382 Å</div><div style="position:absolute;left:194px;top:153.14px;font-size:12px;line-height:1;white-space:nowrap;letter-spacing:0.033px;"><i>c</i> = 11.7810 Å</div><div style="position:absolute;left:194px;top:168.14px;font-size:12px;line-height:1;white-space:nowrap;letter-spacing:-0.029px;">β = 104.78 °</div><div style="position:absolute;left:2px;top:183.14px;font-size:12px;line-height:1;white-space:nowrap;letter-spacing:0.180px;">Cell volume</div><div style="position:absolute;left:194px;top:183.14px;font-size:12px;line-height:1;white-space:nowrap;letter-spacing:0.014px;">1572.28 Å<span style="font-size:8px;position:relative;top:-4px;letter-spacing:0">3</span></div><div style="position:absolute;left:2px;top:198.14px;font-size:12px;line-height:1;white-space:nowrap;letter-spacing:0.154px;">Density, calculated</div><div style="position:absolute;left:194px;top:198.14px;font-size:12px;line-height:1;white-space:nowrap;letter-spacing:0.127px;">1.197 g/cm<span style="font-size:8px;position:relative;top:-4px;letter-spacing:0">3</span></div><div style="position:absolute;left:2px;top:213.14px;font-size:12px;line-height:1;white-space:nowrap;letter-spacing:0.194px;">Pearson code</div><div style="position:absolute;left:194px;top:213.14px;font-size:12px;line-height:1;white-space:nowrap;letter-spacing:0.267px;">mP176</div><div style="position:absolute;left:2px;top:228.14px;font-size:12px;line-height:1;white-space:nowrap;letter-spacing:0.024px;">Formula type</div><div style="position:absolute;left:194px;top:228.14px;font-size:12px;line-height:1;white-space:nowrap;letter-spacing:0.081px;">NOP2Q15R25</div><div style="position:absolute;left:2px;top:243.14px;font-size:12px;line-height:1;white-space:nowrap;letter-spacing:0.018px;">Wyckoff sequence</div><div style="position:absolute;left:194px;top:243.14px;font-size:12px;line-height:1;white-space:nowrap;letter-spacing:-0.647px;">e<span style="font-size:8px;position:relative;top:-4px;letter-spacing:0">44</span></div><div style="position:absolute;left:2px;top:272.84px;font-size:12px;line-height:1;white-space:nowrap;letter-spacing:-0.038px;font-weight:bold;text-decoration:underline;text-underline-offset:1px;text-decoration-thickness:1px;">Atomic coordinates and isotropic displacement parameters (in Å<span style="font-size:8px;position:relative;top:-4px"> 2</span>)</div><div style="position:absolute;left:2px;top:302.84px;font-size:12px;line-height:1;white-space:nowrap;letter-spacing:0.220px;font-weight:bold;">Atom</div><div style="position:absolute;left:69px;top:302.84px;font-size:12px;line-height:1;white-space:nowrap;letter-spacing:0.220px;font-weight:bold;">Ox.</div><div style="position:absolute;left:134.5px;top:302.84px;font-size:12px;line-height:1;white-space:nowrap;letter-spacing:0.220px;font-weight:bold;">Wyck.</div><div style="position:absolute;left:202px;top:302.84px;font-size:12px;line-height:1;white-space:nowrap;letter-spacing:0.220px;font-weight:bold;">x</div><div style="position:absolute;left:269px;top:302.84px;font-size:12px;line-height:1;white-space:nowrap;letter-spacing:0.220px;font-weight:bold;">y</div><div style="position:absolute;left:335px;top:302.84px;font-size:12px;line-height:1;white-space:nowrap;letter-spacing:0.220px;font-weight:bold;">z</div><div style="position:absolute;left:402px;top:302.84px;font-size:12px;line-height:1;white-space:nowrap;letter-spacing:0.220px;font-weight:bold;">B</div><div style="position:absolute;left:2px;top:318.44px;font-size:12px;line-height:1;white-space:nowrap;letter-spacing:0.220px;">C1</div><div style="position:absolute;left:69px;top:318.44px;font-size:12px;line-height:1;white-space:nowrap;letter-spacing:0.220px;">+0</div><div style="position:absolute;left:134.5px;top:318.44px;font-size:12px;line-height:1;white-space:nowrap;letter-spacing:0.220px;">4<i>e</i></div><div style="position:absolute;left:202px;top:318.44px;font-size:12px;line-height:1;white-space:nowrap;letter-spacing:0.220px;">0.33213</div><div style="position:absolute;left:269px;top:318.44px;font-size:12px;line-height:1;white-space:nowrap;letter-spacing:0.220px;">0.01957</div><div style="position:absolute;left:335px;top:318.44px;font-size:12px;line-height:1;white-space:nowrap;letter-spacing:0.220px;">0.31882</div><div style="position:absolute;left:402px;top:318.44px;font-size:12px;line-height:1;white-space:nowrap;letter-spacing:0.220px;">2.5000</div><div style="position:absolute;left:2px;top:333.44px;font-size:12px;line-height:1;white-space:nowrap;letter-spacing:0.220px;">C2</div><div style="position:absolute;left:69px;top:333.44px;font-size:12px;line-height:1;white-space:nowrap;letter-spacing:0.220px;">+0</div><div style="position:absolute;left:134.5px;top:333.44px;font-size:12px;line-height:1;white-space:nowrap;letter-spacing:0.220px;">4<i>e</i></div><div style="position:absolute;left:202px;top:333.44px;font-size:12px;line-height:1;white-space:nowrap;letter-spacing:0.220px;">0.25541</div><div style="position:absolute;left:269px;top:333.44px;font-size:12px;line-height:1;white-space:nowrap;letter-spacing:0.220px;">0.09136</div><div style="position:absolute;left:335px;top:333.44px;font-size:12px;line-height:1;white-space:nowrap;letter-spacing:0.220px;">0.28926</div><div style="position:absolute;left:402px;top:333.44px;font-size:12px;line-height:1;white-space:nowrap;letter-spacing:0.220px;">2.5000</div><div style="position:absolute;left:2px;top:348.44px;font-size:12px;line-height:1;white-space:nowrap;letter-spacing:0.220px;">C3</div><div style="position:absolute;left:69px;top:348.44px;font-size:12px;line-height:1;white-space:nowrap;letter-spacing:0.220px;">+0</div><div style="position:absolute;left:134.5px;top:348.44px;font-size:12px;line-height:1;white-space:nowrap;letter-spacing:0.220px;">4<i>e</i></div><div style="position:absolute;left:202px;top:348.44px;font-size:12px;line-height:1;white-space:nowrap;letter-spacing:0.220px;">0.19237</div><div style="position:absolute;left:269px;top:348.44px;font-size:12px;line-height:1;white-space:nowrap;letter-spacing:0.220px;">0.01567</div><div style="position:absolute;left:335px;top:348.44px;font-size:12px;line-height:1;white-space:nowrap;letter-spacing:0.220px;">0.20718</div><div style="position:absolute;left:402px;top:348.44px;font-size:12px;line-height:1;white-space:nowrap;letter-spacing:0.220px;">2.5000</div><div style="position:absolute;left:2px;top:363.44px;font-size:12px;line-height:1;white-space:nowrap;letter-spacing:0.220px;">C4</div><div style="position:absolute;left:69px;top:363.44px;font-size:12px;line-height:1;white-space:nowrap;letter-spacing:0.220px;">+0</div><div style="position:absolute;left:134.5px;top:363.44px;font-size:12px;line-height:1;white-space:nowrap;letter-spacing:0.220px;">4<i>e</i></div><div style="position:absolute;left:202px;top:363.44px;font-size:12px;line-height:1;white-space:nowrap;letter-spacing:0.220px;">0.20619</div><div style="position:absolute;left:269px;top:363.44px;font-size:12px;line-height:1;white-space:nowrap;letter-spacing:0.220px;">0.86901</div><div style="position:absolute;left:335px;top:363.44px;font-size:12px;line-height:1;white-space:nowrap;letter-spacing:0.220px;">0.15479</div><div style="position:absolute;left:402px;top:363.44px;font-size:12px;line-height:1;white-space:nowrap;letter-spacing:0.220px;">2.5000</div><div style="position:absolute;left:2px;top:378.44px;font-size:12px;line-height:1;white-space:nowrap;letter-spacing:0.220px;">C5</div><div style="position:absolute;left:69px;top:378.44px;font-size:12px;line-height:1;white-space:nowrap;letter-spacing:0.220px;">+0</div><div style="position:absolute;left:134.5px;top:378.44px;font-size:12px;line-height:1;white-space:nowrap;letter-spacing:0.220px;">4<i>e</i></div><div style="position:absolute;left:202px;top:378.44px;font-size:12px;line-height:1;white-space:nowrap;letter-spacing:0.220px;">0.28329</div><div style="position:absolute;left:269px;top:378.44px;font-size:12px;line-height:1;white-space:nowrap;letter-spacing:0.220px;">0.79890</div><div style="position:absolute;left:335px;top:378.44px;font-size:12px;line-height:1;white-space:nowrap;letter-spacing:0.220px;">0.18541</div><div style="position:absolute;left:402px;top:378.44px;font-size:12px;line-height:1;white-space:nowrap;letter-spacing:0.220px;">2.5000</div><div style="position:absolute;left:2px;top:393.44px;font-size:12px;line-height:1;white-space:nowrap;letter-spacing:0.220px;">C6</div><div style="position:absolute;left:69px;top:393.44px;font-size:12px;line-height:1;white-space:nowrap;letter-spacing:0.220px;">+0</div><div style="position:absolute;left:134.5px;top:393.44px;font-size:12px;line-height:1;white-space:nowrap;letter-spacing:0.220px;">4<i>e</i></div><div style="position:absolute;left:202px;top:393.44px;font-size:12px;line-height:1;white-space:nowrap;letter-spacing:0.220px;">0.34653</div><div style="position:absolute;left:269px;top:393.44px;font-size:12px;line-height:1;white-space:nowrap;letter-spacing:0.220px;">0.87327</div><div style="position:absolute;left:335px;top:393.44px;font-size:12px;line-height:1;white-space:nowrap;letter-spacing:0.220px;">0.26732</div><div style="position:absolute;left:402px;top:393.44px;font-size:12px;line-height:1;white-space:nowrap;letter-spacing:0.220px;">2.5000</div><div style="position:absolute;left:2px;top:408.44px;font-size:12px;line-height:1;white-space:nowrap;letter-spacing:0.220px;">C7</div><div style="position:absolute;left:69px;top:408.44px;font-size:12px;line-height:1;white-space:nowrap;letter-spacing:0.220px;">+0</div><div style="position:absolute;left:134.5px;top:408.44px;font-size:12px;line-height:1;white-space:nowrap;letter-spacing:0.220px;">4<i>e</i></div><div style="position:absolute;left:202px;top:408.44px;font-size:12px;line-height:1;white-space:nowrap;letter-spacing:0.220px;">0.43129</div><div style="position:absolute;left:269px;top:408.44px;font-size:12px;line-height:1;white-space:nowrap;letter-spacing:0.220px;">0.79519</div><div style="position:absolute;left:335px;top:408.44px;font-size:12px;line-height:1;white-space:nowrap;letter-spacing:0.220px;">0.29981</div><div style="position:absolute;left:402px;top:408.44px;font-size:12px;line-height:1;white-space:nowrap;letter-spacing:0.220px;">2.5000</div><div style="position:absolute;left:2px;top:423.44px;font-size:12px;line-height:1;white-space:nowrap;letter-spacing:0.220px;">C8</div><div style="position:absolute;left:69px;top:423.44px;font-size:12px;line-height:1;white-space:nowrap;letter-spacing:0.220px;">+0</div><div style="position:absolute;left:134.5px;top:423.44px;font-size:12px;line-height:1;white-space:nowrap;letter-spacing:0.220px;">4<i>e</i></div><div style="position:absolute;left:202px;top:423.44px;font-size:12px;line-height:1;white-space:nowrap;letter-spacing:0.220px;">0.44059</div><div style="position:absolute;left:269px;top:423.44px;font-size:12px;line-height:1;white-space:nowrap;letter-spacing:0.220px;">0.68145</div><div style="position:absolute;left:335px;top:423.44px;font-size:12px;line-height:1;white-space:nowrap;letter-spacing:0.220px;">0.40612</div><div style="position:absolute;left:402px;top:423.44px;font-size:12px;line-height:1;white-space:nowrap;letter-spacing:0.220px;">2.5000</div><div style="position:absolute;left:2px;top:438.44px;font-size:12px;line-height:1;white-space:nowrap;letter-spacing:0.220px;">C9</div><div style="position:absolute;left:69px;top:438.44px;font-size:12px;line-height:1;white-space:nowrap;letter-spacing:0.220px;">+0</div><div style="position:absolute;left:134.5px;top:438.44px;font-size:12px;line-height:1;white-space:nowrap;letter-spacing:0.220px;">4<i>e</i></div><div style="position:absolute;left:202px;top:438.44px;font-size:12px;line-height:1;white-space:nowrap;letter-spacing:0.220px;">0.21606</div><div style="position:absolute;left:269px;top:438.44px;font-size:12px;line-height:1;white-space:nowrap;letter-spacing:0.220px;">0.21751</div><div style="position:absolute;left:335px;top:438.44px;font-size:12px;line-height:1;white-space:nowrap;letter-spacing:0.220px;">0.46202</div><div style="position:absolute;left:402px;top:438.44px;font-size:12px;line-height:1;white-space:nowrap;letter-spacing:0.220px;">2.5000</div><div style="position:absolute;left:2px;top:453.44px;font-size:12px;line-height:1;white-space:nowrap;letter-spacing:0.220px;">C10</div><div style="position:absolute;left:69px;top:453.44px;font-size:12px;line-height:1;white-space:nowrap;letter-spacing:0.220px;">+0</div><div style="position:absolute;left:134.5px;top:453.44px;font-size:12px;line-height:1;white-space:nowrap;letter-spacing:0.220px;">4<i>e</i></div><div style="position:absolute;left:202px;top:453.44px;font-size:12px;line-height:1;white-space:nowrap;letter-spacing:0.220px;">0.31829</div><div style="position:absolute;left:269px;top:453.44px;font-size:12px;line-height:1;white-space:nowrap;letter-spacing:0.220px;">0.35748</div><div style="position:absolute;left:335px;top:453.44px;font-size:12px;line-height:1;white-space:nowrap;letter-spacing:0.220px;">0.37820</div><div style="position:absolute;left:402px;top:453.44px;font-size:12px;line-height:1;white-space:nowrap;letter-spacing:0.220px;">2.5000</div><div style="position:absolute;left:2px;top:468.44px;font-size:12px;line-height:1;white-space:nowrap;letter-spacing:0.220px;">C11</div><div style="position:absolute;left:69px;top:468.44px;font-size:12px;line-height:1;white-space:nowrap;letter-spacing:0.220px;">+0</div><div style="position:absolute;left:134.5px;top:468.44px;font-size:12px;line-height:1;white-space:nowrap;letter-spacing:0.220px;">4<i>e</i></div><div style="position:absolute;left:202px;top:468.44px;font-size:12px;line-height:1;white-space:nowrap;letter-spacing:0.220px;">0.24090</div><div style="position:absolute;left:269px;top:468.44px;font-size:12px;line-height:1;white-space:nowrap;letter-spacing:0.220px;">0.25226</div><div style="position:absolute;left:335px;top:468.44px;font-size:12px;line-height:1;white-space:nowrap;letter-spacing:0.220px;">0.34791</div><div style="position:absolute;left:402px;top:468.44px;font-size:12px;line-height:1;white-space:nowrap;letter-spacing:0.220px;">2.5000</div><div style="position:absolute;left:2px;top:483.44px;font-size:12px;line-height:1;white-space:nowrap;letter-spacing:0.220px;">C12</div><div style="position:absolute;left:69px;top:483.44px;font-size:12px;line-height:1;white-space:nowrap;letter-spacing:0.220px;">+0</div><div style="position:absolute;left:134.5px;top:483.44px;font-size:12px;line-height:1;white-space:nowrap;letter-spacing:0.220px;">4<i>e</i></div><div style="position:absolute;left:202px;top:483.44px;font-size:12px;line-height:1;white-space:nowrap;letter-spacing:0.220px;">0.49778</div><div style="position:absolute;left:269px;top:483.44px;font-size:12px;line-height:1;white-space:nowrap;letter-spacing:0.220px;">0.92748</div><div style="position:absolute;left:335px;top:483.44px;font-size:12px;line-height:1;white-space:nowrap;letter-spacing:0.220px;">0.33078</div><div style="position:absolute;left:402px;top:483.44px;font-size:12px;line-height:1;white-space:nowrap;letter-spacing:0.220px;">2.5000</div><div style="position:absolute;left:2px;top:498.44px;font-size:12px;line-height:1;white-space:nowrap;letter-spacing:0.220px;">C13</div><div style="position:absolute;left:69px;top:498.44px;font-size:12px;line-height:1;white-space:nowrap;letter-spacing:0.220px;">+0</div><div style="position:absolute;left:134.5px;top:498.44px;font-size:12px;line-height:1;white-space:nowrap;letter-spacing:0.220px;">4<i>e</i></div><div style="position:absolute;left:202px;top:498.44px;font-size:12px;line-height:1;white-space:nowrap;letter-spacing:0.220px;">0.19237</div><div style="position:absolute;left:269px;top:498.44px;font-size:12px;line-height:1;white-space:nowrap;letter-spacing:0.220px;">0.74210</div><div style="position:absolute;left:335px;top:498.44px;font-size:12px;line-height:1;white-space:nowrap;letter-spacing:0.220px;">0.05399</div><div style="position:absolute;left:402px;top:498.44px;font-size:12px;line-height:1;white-space:nowrap;letter-spacing:0.220px;">2.5000</div><div style="position:absolute;left:530px;top:0;width:17px;height:502px;background:#f0f0f0"></div><div style="position:absolute;left:530px;top:18px;width:15px;height:213px;background:#cdcdcd"></div><svg style="position:absolute;left:530px;top:0" width="17" height="502" viewBox="0 0 17 502"><path d="M4 12.5l3.5-3.5 3.5 3.5" stroke="#505050" stroke-width="1.9" fill="none"/><path d="M4 490.5l3.5 3.5 3.5-3.5" stroke="#505050" stroke-width="1.9" fill="none"/></svg></div>
<div style="position:absolute;left:5.5px;top:845.87px;font-size:11.5px;line-height:1;white-space:nowrap;color:#000;letter-spacing:-0.562px;">Ready</div>
<div style="position:absolute;left:1534px;top:842px;width:85px;height:17px;box-sizing:border-box;border:1px solid #c0c0c0;border-bottom:0;overflow:hidden"><div style="position:absolute;left:1.5px;top:2.87px;font-size:11.5px;line-height:1;white-space:nowrap;letter-spacing:-0.149px;">R-factor=19.1%</div></div>
<div style="position:absolute;left:1621px;top:842px;width:60px;height:17px;box-sizing:border-box;border:1px solid #c0c0c0;border-bottom:0;overflow:hidden"><div style="position:absolute;left:1.5px;top:2.87px;font-size:11.5px;line-height:1;white-space:nowrap;letter-spacing:-0.391px;">44 parms</div></div>
<div style="position:absolute;left:1683px;top:842px;width:60px;height:17px;box-sizing:border-box;border:1px solid #c0c0c0;border-bottom:0;overflow:hidden"><div style="position:absolute;left:1.5px;top:2.87px;font-size:11.5px;line-height:1;white-space:nowrap;letter-spacing:-0.179px;">1408 atoms</div></div>
<div style="position:absolute;left:1745px;top:842px;width:62px;height:17px;box-sizing:border-box;border:1px solid #c0c0c0;border-bottom:0;overflow:hidden"><div style="position:absolute;left:1.5px;top:2.87px;font-size:11.5px;line-height:1;white-space:nowrap;letter-spacing:-0.014px;">1360 bonds</div></div>
<div style="position:absolute;left:1809px;top:842px;width:75px;height:17px;box-sizing:border-box;border:1px solid #c0c0c0;border-bottom:0;overflow:hidden"><div style="position:absolute;left:1.5px;top:2.87px;font-size:11.5px;line-height:1;white-space:nowrap;letter-spacing:0.019px;">0 polyhedra</div></div>
<svg style="position:absolute;left:1886px;top:845px;" width="14" height="14" viewBox="0 0 14 14"><path d="M13 2L2 13M13 6L6 13M13 10l-3 3" stroke="#b0b0b0" stroke-width="1"/></svg>
<div style="position:absolute;left:0px;top:0px;width:1902px;height:1px;background:#5a5a5a"></div>
<div style="position:absolute;left:0px;top:0px;width:1px;height:860px;background:#5a5a5a"></div>
<div style="position:absolute;left:1901px;top:0px;width:1px;height:860px;background:#1c2232"></div>
<div style="position:absolute;left:0px;top:859px;width:1902px;height:1px;background:#2a2a30"></div>
<div style="position:absolute;left:329px;top:56px;width:22px;height:22px;box-sizing:border-box;border:1px solid #0078d7;background:#cce4f7"></div><div style="position:absolute;left:477px;top:56px;width:22px;height:22px;box-sizing:border-box;border:1px solid #0078d7;background:#cce4f7"></div><div style="position:absolute;left:587px;top:56px;width:22px;height:22px;box-sizing:border-box;border:1px solid #0078d7;background:#cce4f7"></div><svg style="position:absolute;left:14.5px;top:59px" width="16" height="16" viewBox="0 0 16 16" shape-rendering="crispEdges"><path d="M2.5 .5h7l3 3v10h-10z" fill="#fff" stroke="#404040"/><path d="M9.5 .5v3h3" fill="none" stroke="#404040"/></svg><svg style="position:absolute;left:36.5px;top:59px" width="16" height="16" viewBox="0 0 16 16" shape-rendering="crispEdges"><path d="M.5 13.5v-9h4l1 1h6v2.5" fill="#ffffa0" stroke="#404040"/><path d="M.5 13.5l3.5-6h11.5l-4 6z" fill="#a0a040" stroke="#404040"/><path d="M9 2.5c1.5-2 4-2 5.5.5" fill="none" stroke="#404040" shape-rendering="auto"/><path d="M15 .5v3.5h-3.5z" fill="#404040"/></svg><svg style="position:absolute;left:58.0px;top:59px" width="16" height="16" viewBox="0 0 16 16" shape-rendering="crispEdges"><rect x="1.5" y=".5" width="13" height="13" fill="#a0a040" stroke="#404040"/><rect x="4.5" y=".5" width="7" height="6" fill="#fff" stroke="#404040"/><rect x="4" y="9" width="8" height="5" fill="#404040"/><rect x="9" y="10" width="2" height="3" fill="#fff"/><rect x="12" y="1" width="1" height="1" fill="#fff"/></svg><svg style="position:absolute;left:80.5px;top:59px" width="16" height="16" viewBox="0 0 16 16" shape-rendering="crispEdges"><path d="M3 0h3.5v3l1 2.5v1h1v-1l1-2.5V0H13l.5 3 2 5.5v5.5h-5.5V9.5h-4V14H.5V8.5l2-5.5z" fill="#404040" shape-rendering="auto"/><path d="M4.5 1v2.5M11.5 1v2.5M3.5 5.5v3.5M12.5 5.5v3.5M2.5 10v3.5M13.5 10v3.5" stroke="#ffff40" fill="none"/></svg><svg style="position:absolute;left:103.0px;top:59px" width="16" height="16" viewBox="0 0 16 16" shape-rendering="crispEdges"><path d="M1.5 .5h6l3 3v9h-9z" fill="#fff" stroke="#404040"/><circle cx="7.5" cy="7.5" r="3.2" fill="#e8ffff" stroke="#404040" shape-rendering="auto"/><path d="M5.5 8.5a2.3 2.3 0 0 0 3.5 1" stroke="#40e0e0" fill="none" stroke-width="1.2" shape-rendering="auto"/><path d="M10 10l4 4" stroke="#404040" stroke-width="1.8" shape-rendering="auto"/></svg><svg style="position:absolute;left:124.0px;top:59px" width="16" height="16" viewBox="0 0 16 16" shape-rendering="crispEdges"><path d="M4.5 .5h8.5l-1.5 5h-8.5z" fill="#fff" stroke="#404040" shape-rendering="auto"/><path d="M.5 8.5l2.5-3h10l2.5 3v3.5l-2 1.5h-11l-2-1.5z" fill="#fff" stroke="#404040" shape-rendering="auto"/><path d="M.5 9.5h15M1.5 11.5h13M6 2.5h5M5.5 4h5" stroke="#404040" fill="none"/><rect x="7" y="10" width="3" height="1" fill="#ffff40"/></svg><svg style="position:absolute;left:155.0px;top:59px" width="16" height="16" viewBox="0 0 16 16" shape-rendering="crispEdges"><path d="M5.5 .5l2.5 8 2.5-8M8 8.5l-2 2.5M8 8.5l2 2.5" stroke="#a0a0a0" fill="none" shape-rendering="auto"/><ellipse cx="5" cy="12" rx="1.7" ry="2" fill="none" stroke="#a0a0a0" shape-rendering="auto"/><ellipse cx="11" cy="12" rx="1.7" ry="2" fill="none" stroke="#a0a0a0" shape-rendering="auto"/></svg><svg style="position:absolute;left:176.5px;top:59px" width="16" height="16" viewBox="0 0 16 16" shape-rendering="crispEdges"><path d="M.5 .5h5l2 2v7h-7z" fill="#fff" stroke="#404040"/><path d="M2 3.5h3M2 5.5h4M2 7.5h4" stroke="#404040"/><path d="M7.5 4.5h5l3 3v6h-8z" fill="#fff" stroke="#4040a0"/><path d="M9 8.5h4M9 10.5h5M9 12.5h5" stroke="#4040a0"/></svg><svg style="position:absolute;left:198.5px;top:59px" width="16" height="16" viewBox="0 0 16 16" shape-rendering="crispEdges"><path d="M1 2.5h13v10h-13z" fill="#a0a0a0" stroke="#a0a0a0" stroke-linejoin="round" stroke-width="2" shape-rendering="auto"/><rect x="5" y="0" width="5" height="2" fill="#a0a0a0"/><rect x="4" y="3" width="6" height="1" fill="#e0e0e0"/><path d="M7.5 7.5h6l1.5 1.5v5h-7.5z" fill="#f0f0f0" stroke="#a0a0a0"/><path d="M9 10.5h4M9 12.5h5" stroke="#a0a0a0"/></svg><svg style="position:absolute;left:228.0px;top:59px" width="16" height="16" viewBox="0 0 16 16" shape-rendering="crispEdges"><path d="M6 9.5c3-6 10-3 6 3.5" fill="none" stroke="#4040a0" stroke-width="1.3" shape-rendering="auto"/><path d="M1 4v7h7z" fill="#4040a0" shape-rendering="auto"/></svg><svg style="position:absolute;left:250.0px;top:59px" width="16" height="16" viewBox="0 0 16 16" shape-rendering="crispEdges"><path d="M10 9.5c-3-6-10-3-6 3.5" fill="none" stroke="#a0a0a0" stroke-width="1.3" shape-rendering="auto"/><path d="M15 4v7h-7z" fill="#a0a0a0" shape-rendering="auto"/></svg><svg style="position:absolute;left:280.0px;top:59px" width="16" height="16" viewBox="0 0 16 16" shape-rendering="crispEdges"><path d="M3 1.5v12l11-6z" fill="#40ff40" shape-rendering="auto"/></svg><svg style="position:absolute;left:302.0px;top:59px" width="16" height="16" viewBox="0 0 16 16" shape-rendering="crispEdges"><rect x="2" y="2.5" width="12" height="11" fill="#a0a0a0"/></svg><svg style="position:absolute;left:332.0px;top:59px" width="16" height="16" viewBox="0 0 16 16" shape-rendering="crispEdges"><path d="M1.5 13l7-9" stroke="#a04040" stroke-width="1.8" shape-rendering="auto"/><path d="M1 13.5l7-9" stroke="#404040" stroke-width=".8" shape-rendering="auto"/><path d="M5 2.5l2.5-2 5 3.5 1.5 3-2 .5-1.5-2.5-2.5-.5-1-1.5z" fill="#ffff40" stroke="#404040" stroke-width=".7" shape-rendering="auto"/><path d="M9 10a3 3 0 1 0 4.5 0M11.2 8v3.5" stroke="#404040" fill="none" shape-rendering="auto"/></svg><svg style="position:absolute;left:353.5px;top:59px" width="16" height="16" viewBox="0 0 16 16" shape-rendering="crispEdges"><rect x="1.5" y="1.5" width="13" height="10" fill="#fff" stroke="#404040"/><rect x="1" y="0" width="14" height="2" fill="#4040a0"/><g transform="translate(0 3) scale(.95)"><path d="M1.5 13l7-9" stroke="#a04040" stroke-width="1.8" shape-rendering="auto"/><path d="M1 13.5l7-9" stroke="#404040" stroke-width=".8" shape-rendering="auto"/><path d="M5 2.5l2.5-2 5 3.5 1.5 3-2 .5-1.5-2.5-2.5-.5-1-1.5z" fill="#ffff40" stroke="#404040" stroke-width=".7" shape-rendering="auto"/></g></svg><svg style="position:absolute;left:376.0px;top:59px" width="16" height="16" viewBox="0 0 16 16" shape-rendering="crispEdges"><circle cx="3" cy="7" r="2.2" fill="#ffff40" stroke="#404040" stroke-width=".6" stroke-dasharray="1 1" shape-rendering="auto"/><circle cx="3" cy="12.5" r="2.2" fill="#ffff40" stroke="#404040" stroke-width=".6" stroke-dasharray="1 1" shape-rendering="auto"/><circle cx="7" cy="9.7" r="2.2" fill="#a0a040" shape-rendering="auto"/><path d="M6 2l9 10" stroke="#4040a0" stroke-width="2" shape-rendering="auto"/><path d="M5.5 1.5l2.5 2.8" stroke="#ffff40" stroke-width="2" shape-rendering="auto"/><path d="M11 .2v3M9.5 1.7h3M14 2v2.6M12.7 3.3h2.6" stroke="#404040" stroke-width=".9"/></svg><svg style="position:absolute;left:398.0px;top:59px" width="16" height="16" viewBox="0 0 16 16" shape-rendering="crispEdges"><rect x="6" y="0" width="4" height="3" fill="#a0a0a0"/><path d="M4 5h6v7.5h2.5v1.5h-9v-1.5h2.5v-6h-2z" fill="#a0a0a0"/></svg><svg style="position:absolute;left:428.0px;top:59px" width="16" height="16" viewBox="0 0 16 16" shape-rendering="crispEdges"><path d="M13.5 .5c-5 2.5-5.5 4.5-4 7s1 4.5-4.5 7c8.5-1.5 10-5.5 8-8s-2-3.5 .5-6z" fill="#404040" shape-rendering="auto"/><path d="M5.5 1v3M4 2.5h3M2 4.5v3M.5 6h3" stroke="#404040" stroke-width="1"/></svg><svg style="position:absolute;left:450.5px;top:59px" width="16" height="16" viewBox="0 0 16 16" shape-rendering="crispEdges"><rect x="0" y="0" width="16" height="15" fill="#404040"/><path d="M0 5.5h16" stroke="#f0f0f0"/><path d="M2.5 0v13.5" stroke="#ffff40"/><path d="M2.5 13c1 3 2-5.5 13.5-5.5" stroke="#ffff40" fill="none" stroke-width="1.2" shape-rendering="auto"/></svg><svg style="position:absolute;left:480.0px;top:59px" width="16" height="16" viewBox="0 0 16 16" shape-rendering="crispEdges"><rect x=".5" y=".5" width="15" height="13" fill="#fff" stroke="#404040"/><path d="M5.5 3.5h9M5.5 6.5h9M5.5 9.5h9M5.5 12h9" stroke="#404040"/><circle cx="3" cy="3" r="1.6" fill="#ff4040" shape-rendering="auto"/><circle cx="3" cy="6" r="1.6" fill="#40ff40" shape-rendering="auto"/><circle cx="3" cy="9" r="1.6" fill="#ffff40" shape-rendering="auto"/><circle cx="3" cy="12" r="1.6" fill="#40ff40" shape-rendering="auto"/></svg><svg style="position:absolute;left:502.0px;top:59px" width="16" height="16" viewBox="0 0 16 16" shape-rendering="crispEdges"><rect x=".5" y=".5" width="15" height="13" fill="#fff" stroke="#404040"/><path d="M3 2.5h5M3 4.5h3M9 4.5h4M3 6.5h10M3 8.5h2M7 8.5h2M11 8.5h2M3 10.5h2M7 10.5h2M11 10.5h2M3 12h10" stroke="#c0c0c0"/></svg><svg style="position:absolute;left:524.0px;top:59px" width="16" height="16" viewBox="0 0 16 16" shape-rendering="crispEdges"><rect x="1.5" y="1.5" width="13" height="9" fill="#fff" stroke="#404040" stroke-width="1.2"/><rect x="1" y="0" width="14" height="2" fill="#4040a0"/><path d="M3.5 5v10M6.5 1v14M9.5 7v8M12.5 12v3" stroke="#ff4040" stroke-width="1.2"/></svg><svg style="position:absolute;left:546.0px;top:59px" width="16" height="16" viewBox="0 0 16 16" shape-rendering="crispEdges"><rect x="1.5" y="1.5" width="13" height="9" fill="#fff" stroke="#404040" stroke-width="1.2"/><rect x="1" y="0" width="14" height="2" fill="#4040a0"/><rect x="3.5" y="7" width="12" height="8" fill="#ffff40" stroke="#c0c0c0" stroke-width=".8"/><text x="4.6" y="13.6" font-size="8" font-weight="bold" font-family="Liberation Sans" fill="#202020" letter-spacing="-.2">hkl</text></svg><svg style="position:absolute;left:568.0px;top:59px" width="16" height="16" viewBox="0 0 16 16" shape-rendering="crispEdges"><rect x="1.5" y="1.5" width="13" height="9" fill="#fff" stroke="#404040" stroke-width="1.2"/><rect x="1" y="0" width="14" height="2" fill="#4040a0"/><path d="M3 13.5h10M8 7v6" stroke="#ffff40" stroke-width="2.2"/><rect x="7" y="11.5" width="2" height="2.5" fill="#4040ff"/><circle cx="8" cy="6.5" r="2.2" fill="#ff4040" shape-rendering="auto"/><circle cx="3" cy="13.2" r="2.2" fill="#ff4040" shape-rendering="auto"/><circle cx="13" cy="13.2" r="2.2" fill="#ff4040" shape-rendering="auto"/></svg><svg style="position:absolute;left:590.0px;top:59px" width="16" height="16" viewBox="0 0 16 16" shape-rendering="crispEdges"><rect x="1" y="0" width="14" height="14" fill="#404040"/><rect x="0" y="0" width="16" height="2" fill="#4040ff"/><path d="M9 3.5h5" stroke="#40a040"/><path d="M1 3.5h2l1.5 3.5 1-3 2 6 1-2.5 4 6h2" stroke="#ffff40" fill="none" stroke-width="1.2" shape-rendering="auto"/></svg><div style="position:absolute;left:147px;top:57px;width:1px;height:19px;background:#c8c8c8"></div><div style="position:absolute;left:221px;top:57px;width:1px;height:19px;background:#c8c8c8"></div><div style="position:absolute;left:273px;top:57px;width:1px;height:19px;background:#c8c8c8"></div><div style="position:absolute;left:325px;top:57px;width:1px;height:19px;background:#c8c8c8"></div><div style="position:absolute;left:421px;top:57px;width:1px;height:19px;background:#c8c8c8"></div><div style="position:absolute;left:473px;top:57px;width:1px;height:19px;background:#c8c8c8"></div><svg style="position:absolute;left:611px;top:68px" width="8" height="5" viewBox="0 0 8 5"><path d="M0.5 0.5h7l-3.5 4z" fill="#000"/></svg><div style="position:absolute;left:645px;top:816.5px;width:22px;height:22px;box-sizing:border-box;border:1px solid #0078d7;background:#cce4f7"></div><div style="position:absolute;left:719px;top:816.5px;width:22px;height:22px;box-sizing:border-box;border:1px solid #0078d7;background:#cce4f7"></div><div style="position:absolute;left:741px;top:816.5px;width:22px;height:22px;box-sizing:border-box;border:1px solid #0078d7;background:#cce4f7"></div><div style="position:absolute;left:911px;top:816.5px;width:22px;height:22px;box-sizing:border-box;border:1px solid #0078d7;background:#cce4f7"></div><svg style="position:absolute;left:17.0px;top:820px" width="16" height="16" viewBox="0 0 16 16" shape-rendering="crispEdges"><circle cx="4.2" cy="4.2" r="4" fill="#404040" shape-rendering="auto"/><circle cx="11.8" cy="4.2" r="3.5" fill="#fff" stroke="#404040" shape-rendering="auto"/><circle cx="4.2" cy="11.8" r="3.5" fill="#fff" stroke="#404040" shape-rendering="auto"/><circle cx="11.8" cy="11.8" r="4" fill="#404040" shape-rendering="auto"/></svg><svg style="position:absolute;left:39.0px;top:820px" width="16" height="16" viewBox="0 0 16 16" shape-rendering="crispEdges"><circle cx="4.2" cy="4.2" r="4.1" fill="#a0a0a0" shape-rendering="auto"/><circle cx="11.8" cy="4.2" r="4.1" fill="#a0a0a0" shape-rendering="auto"/><circle cx="4.2" cy="11.8" r="4.1" fill="#a0a0a0" shape-rendering="auto"/><circle cx="11.8" cy="11.8" r="4.1" fill="#a0a0a0" shape-rendering="auto"/><rect x="7" y="7" width="2" height="2" fill="#e8e8e8"/></svg><svg style="position:absolute;left:61.0px;top:820px" width="16" height="16" viewBox="0 0 16 16" shape-rendering="crispEdges"><path d="M5 4c0-4.5 6.5-4.5 6.5-.5 0 2.5-3.3 2.5-3.3 5" stroke="#404040" stroke-width="1.9" fill="none" shape-rendering="auto"/><rect x="1" y="10.5" width="4.5" height="4.5" fill="#fff" stroke="#404040" stroke-width="1.1" rx="1"/><rect x="10.5" y="10.5" width="4.5" height="4.5" fill="#fff" stroke="#404040" stroke-width="1.1" rx="1"/><rect x="7.3" y="11.8" width="1.7" height="1.7" fill="#404040"/></svg><svg style="position:absolute;left:91.5px;top:820px" width="16" height="16" viewBox="0 0 16 16" shape-rendering="crispEdges"><path d="M1.5 14.500c0-6 2-9 5-10" stroke="#404040" stroke-width="1.3" fill="none" shape-rendering="auto"/><path d="M5 6l5-5 5.5 5.5-5 5z" fill="#fff" stroke="#404040" shape-rendering="auto"/><path d="M5.7 6.700l2-2 5 5-2 2z" fill="#ffff40" shape-rendering="auto"/><path d="M12 3.500l2.5 2.5-3 3" fill="none" stroke="#c0c0c0" shape-rendering="auto"/></svg><svg style="position:absolute;left:113.0px;top:820px" width="16" height="16" viewBox="0 0 16 16" shape-rendering="crispEdges"><path d="M4 0v7.500M.5 3.500h7.5" stroke="#404040" stroke-width="1.6"/><circle cx="11.8" cy="4" r="3.6" fill="#ffff40" stroke="#404040" stroke-width=".8" shape-rendering="auto"/><circle cx="4.2" cy="12" r="3.6" fill="#ffff40" stroke="#404040" stroke-width=".8" shape-rendering="auto"/><circle cx="11.8" cy="12" r="3.6" fill="#ffff40" stroke="#404040" stroke-width=".8" shape-rendering="auto"/></svg><svg style="position:absolute;left:135.0px;top:820px" width="16" height="16" viewBox="0 0 16 16" shape-rendering="crispEdges"><path d="M3.5 3.500v8M0 7.500h9" stroke="#101010" stroke-width="1.7"/><circle cx="12" cy="7.5" r="3.4" fill="#ffff40" stroke="#404040" stroke-width=".8" shape-rendering="auto"/></svg><svg style="position:absolute;left:157.0px;top:820px" width="16" height="16" viewBox="0 0 16 16" shape-rendering="crispEdges"><circle cx="8" cy="5" r="3.5" fill="#a0a0a0" shape-rendering="auto"/><circle cx="5" cy="10" r="3.5" fill="#a0a0a0" shape-rendering="auto"/><circle cx="11" cy="10" r="3.5" fill="#a0a0a0" shape-rendering="auto"/><path d="M.5 1v3M.5 11v3M15.5 1v3M15.5 11v3M.5 .500h3M12.5 .500h3M.5 14.500h3M12.5 14.500h3" stroke="#a0a0a0" fill="none"/></svg><svg style="position:absolute;left:187.0px;top:820px" width="16" height="16" viewBox="0 0 16 16" shape-rendering="crispEdges"><path d="M5 .700h6l4.3 4.300v6l-4.3 4.300h-6l-4.3-4.300v-6z" fill="#ffff40" stroke="#202020" stroke-width="1.7" shape-rendering="auto"/><rect x="5.5" y="5.5" width="5" height="5" fill="#a0a040" stroke="#808040" stroke-width=".6"/></svg><svg style="position:absolute;left:209.0px;top:820px" width="16" height="16" viewBox="0 0 16 16" shape-rendering="crispEdges"><circle cx="8" cy="8" r="6.8" fill="#fff" stroke="#404040" stroke-width="1" stroke-dasharray="1 1.2" shape-rendering="auto"/><circle cx="8" cy="8" r="4" fill="#a0a040" stroke="#707030" stroke-width=".6" shape-rendering="auto"/></svg><svg style="position:absolute;left:231.0px;top:820px" width="16" height="16" viewBox="0 0 16 16" shape-rendering="crispEdges"><path d="M4.3 1.500h7.400l3.6 6.5-3.6 6.500h-7.400l-3.6-6.500z" fill="none" stroke="#4848ff" stroke-width="1.7" shape-rendering="auto"/></svg><svg style="position:absolute;left:253.0px;top:820px" width="16" height="16" viewBox="0 0 16 16" shape-rendering="crispEdges"><path d="M8.5 14.500h-4.200l-3.6-6.5 1.8-3.3" fill="none" stroke="#4848ff" stroke-width="1.7" shape-rendering="auto"/><path d="M2.5 4.700l1.8-3.200h7.400l3.6 6.5-3.6 6.500h-3.2" fill="none" stroke="#ffff40" stroke-width="1.7" shape-rendering="auto"/></svg><svg style="position:absolute;left:283.0px;top:820px" width="16" height="16" viewBox="0 0 16 16" shape-rendering="crispEdges"><path d="M3 3h10v10h-10zM3 3l10 10M13 3l-10 10" stroke="#4848ff" fill="none" stroke-width="1" shape-rendering="auto"/><circle cx="2.6" cy="2.6" r="2.1" fill="#fff" stroke="#202020" stroke-width="1.1" shape-rendering="auto"/><circle cx="13.4" cy="2.6" r="2.1" fill="#fff" stroke="#202020" stroke-width="1.1" shape-rendering="auto"/><circle cx="2.6" cy="13.4" r="2.1" fill="#fff" stroke="#202020" stroke-width="1.1" shape-rendering="auto"/><circle cx="13.4" cy="13.4" r="2.1" fill="#fff" stroke="#202020" stroke-width="1.1" shape-rendering="auto"/></svg><svg style="position:absolute;left:305.0px;top:820px" width="16" height="16" viewBox="0 0 16 16" shape-rendering="crispEdges"><path d="M6 .500h4v4.500l2 2M6 .500v4.500l-2 2M8 9.500l-2 2M8 9.500l2 2M6 7l2 2.5 2-2.5" fill="none" stroke="#a0a0a0" shape-rendering="auto"/><circle cx="4" cy="12" r="2.5" fill="none" stroke="#a0a0a0" shape-rendering="auto"/><circle cx="12" cy="12" r="2.5" fill="none" stroke="#a0a0a0" shape-rendering="auto"/></svg><svg style="position:absolute;left:335.0px;top:820px" width="16" height="16" viewBox="0 0 16 16" shape-rendering="crispEdges"><path d="M.7 3.500l3-3h11.500v11.500l-3 3h-11.500zM.7 3.500h11.500v11.500M12.2 3.500l3-3M3.7 .500v11.500h11.500M3.7 12l-3 3" fill="none" stroke="#4848ff" stroke-width="1" shape-rendering="auto"/><path d="M4 1h11v11h-11z" fill="none" stroke="#404040" stroke-width="1.4" shape-rendering="auto"/></svg><svg style="position:absolute;left:357.5px;top:820px" width="16" height="16" viewBox="0 0 16 16" shape-rendering="crispEdges"><path d="M8 .500l7 7.5-7 7.5-7-7.500z" fill="#a0a0a0" shape-rendering="auto"/></svg><svg style="position:absolute;left:387.0px;top:820px" width="16" height="16" viewBox="0 0 16 16" shape-rendering="crispEdges"><path d="M3 1.500h10l2.5 5-1.5 1.5 1.5 5h-3l-1-1.500h-7l-1 1.500h-3l1.5-5-1.5-1.500z" fill="#e8e8e8" stroke="#a0a0a0" stroke-width="1.6" shape-rendering="auto"/><path d="M3 6.500h10M5 9l3 2 3-2" stroke="#a0a0a0" stroke-width="1.4" fill="none" shape-rendering="auto"/></svg><svg style="position:absolute;left:409.0px;top:820px" width="16" height="16" viewBox="0 0 16 16" shape-rendering="crispEdges"><circle cx="8" cy="8" r="5.5" fill="#a0a040" stroke="#606030" stroke-width=".7" shape-rendering="auto"/><path d="M.5 4l15 9M.5 13l15-10" stroke="#ff3030" stroke-width="1.7" shape-rendering="auto"/></svg><svg style="position:absolute;left:431.0px;top:820px" width="16" height="16" viewBox="0 0 16 16" shape-rendering="crispEdges"><path d="M6 .500l5 3.5 4-.5 1 5.5-4 4-5-1-4.5 3.5-1.5-1.5 3.5-4.5-1.5-4z" fill="#a0a0a0" shape-rendering="auto"/></svg><svg style="position:absolute;left:461.0px;top:820px" width="16" height="16" viewBox="0 0 16 16" shape-rendering="crispEdges"><circle cx="4" cy="11.5" r="3.6" fill="#a0a0a0" shape-rendering="auto"/><text x="6.3" y="8" font-size="8.5" font-weight="bold" font-family="Liberation Sans" fill="#a0a0a0">Fe</text></svg><svg style="position:absolute;left:483.0px;top:820px" width="16" height="16" viewBox="0 0 16 16" shape-rendering="crispEdges"><text x="8" y="14.8" font-size="20" font-weight="bold" text-anchor="middle" font-family="Liberation Serif" fill="#484848">T</text></svg><svg style="position:absolute;left:530.0px;top:820px" width="16" height="16" viewBox="0 0 16 16" shape-rendering="crispEdges"><path d="M8 0v5.500M8 16v-5.500M0 8h5.500M16 8h-5.5" stroke="#202020" stroke-width="1.3"/><path d="M5.5 3h5l-2.5 3zM5.5 13h5l-2.5-3zM3 5.500v5l3-2.500zM13 5.500v5l-3-2.500z" fill="#202020" shape-rendering="auto"/><circle cx="8" cy="8" r="2" fill="#ffff40" shape-rendering="auto"/></svg><svg style="position:absolute;left:552.0px;top:820px" width="16" height="16" viewBox="0 0 16 16" shape-rendering="crispEdges"><rect x=".7" y=".7" width="14.6" height="14.6" fill="none" stroke="#a0a0a0" stroke-width="1.2"/><path d="M8 2l2.5 3h-5zM8 14l2.5-3h-5zM2 8l3-2.500v5zM14 8l-3-2.500v5z" fill="#a0a0a0" shape-rendering="auto"/><path d="M3 3l10 10M13 3l-10 10" stroke="#a0a0a0" stroke-width=".9" stroke-dasharray="2 6 2 20" shape-rendering="auto"/></svg><svg style="position:absolute;left:574.0px;top:820px" width="16" height="16" viewBox="0 0 16 16" shape-rendering="crispEdges"><rect x=".7" y=".7" width="14.6" height="14.6" fill="none" stroke="#a0a0a0" stroke-width="1.2"/><path d="M8 2v12M2 8h12" stroke="#a0a0a0" stroke-width="1.3"/><path d="M8 1.500l2.5 3h-5zM8 14.500l2.5-3h-5zM1.5 8l3-2.500v5zM14.5 8l-3-2.500v5z" fill="#a0a0a0" shape-rendering="auto"/></svg><svg style="position:absolute;left:596.0px;top:820px" width="16" height="16" viewBox="0 0 16 16" shape-rendering="crispEdges"><path d="M8 0l3.5 4h-7zM8 16l3.5-4h-7zM0 8l4-3.500v7zM16 8l-4-3.500v7z" fill="#a0a0a0" shape-rendering="auto"/><rect x="5" y="5.5" width="6" height="5" fill="#f0f0f0" stroke="#a0a0a0" stroke-width="1.3"/></svg><svg style="position:absolute;left:626.0px;top:820px" width="16" height="16" viewBox="0 0 16 16" shape-rendering="crispEdges"><path d="M8.5 0v10.5" stroke="#404040" stroke-width="1.1"/><path d="M8.5 10.500l-7.5 4.500M8.5 10.500l7.5 4.5" stroke="#4848ff" stroke-width="1.1" shape-rendering="auto"/></svg><svg style="position:absolute;left:648.0px;top:820px" width="16" height="16" viewBox="0 0 16 16" shape-rendering="crispEdges"><path d="M8 3.500v6.500l-5 3M8 10l5 3" stroke="#202020" stroke-width="1.2" fill="none" shape-rendering="auto"/><circle cx="8" cy="3" r="2.3" fill="#4848ff" shape-rendering="auto"/><circle cx="3" cy="12.5" r="2.5" fill="#4848ff" shape-rendering="auto"/><circle cx="13" cy="12.5" r="2.5" fill="#4848ff" shape-rendering="auto"/></svg><svg style="position:absolute;left:670.0px;top:820px" width="16" height="16" viewBox="0 0 16 16" shape-rendering="crispEdges"><path d="M5.5 .500h5l5 5.500v5l-3.5 4h-8l-3.5-4v-5z" fill="#4848ff" shape-rendering="auto"/><path d="M3 6.500h10l-5 8.500z" fill="none" stroke="#303060" stroke-width="1.1" shape-rendering="auto"/></svg><svg style="position:absolute;left:700.0px;top:820px" width="16" height="16" viewBox="0 0 16 16" shape-rendering="crispEdges"><rect x=".6" y=".6" width="14.8" height="14.8" fill="#fff" stroke="#202020" stroke-width="1.2"/><rect x="3.6" y="3.6" width="8.8" height="8.8" fill="#fff" stroke="#202020" stroke-width="1.2"/><path d="M1 1l3 3M15 1l-3 3M1 15l3-3M15 15l-3-3" stroke="#202020" stroke-width=".8" shape-rendering="auto"/></svg><svg style="position:absolute;left:722.0px;top:820px" width="16" height="16" viewBox="0 0 16 16" shape-rendering="crispEdges"><defs><pattern id="dt" width="2" height="2" patternUnits="userSpaceOnUse"><rect width="1" height="1" fill="#4848ff"/><rect x="1" y="1" width="1" height="1" fill="#4848ff"/></pattern></defs><path d="M4.5 .500h5l5.5 5.500v5l-4 4h-5.500l-5-5v-5.500z" fill="#4848ff" shape-rendering="auto"/><path d="M7 3l3-.5 5 5v4l-3.5 3.500h-4l-4-4.500z" fill="#d8e8ff"/><path d="M7 3l3-.5 5 5v4l-3.5 3.500h-4l-4-4.500z" fill="url(#dt)"/></svg><svg style="position:absolute;left:744.0px;top:820px" width="16" height="16" viewBox="0 0 16 16" shape-rendering="crispEdges"><circle cx="8" cy="8" r="7.3" fill="#4848ff" shape-rendering="auto"/><ellipse cx="5.5" cy="4.7" rx="2.6" ry="2.1" fill="#fff" shape-rendering="auto"/></svg><svg style="position:absolute;left:766.0px;top:820px" width="16" height="16" viewBox="0 0 16 16" shape-rendering="crispEdges"><path d="M4 3v5.500l-3 5M4 8.500l3 5M12 3v5.500l-3 5M12 8.500l3 5" stroke="#202020" stroke-width="1" fill="none" shape-rendering="auto"/></svg><svg style="position:absolute;left:796.0px;top:820px" width="16" height="16" viewBox="0 0 16 16" shape-rendering="crispEdges"><path d="M4.5 .500v11h11.500M4.5 11.500l-3.5 4" stroke="#404040" stroke-width="1.2" fill="none" shape-rendering="auto"/><text x="6" y="5" font-size="6.5" font-family="Liberation Sans" fill="#4848ff">b</text><text x="12" y="9.5" font-size="6.5" font-family="Liberation Sans" fill="#4848ff">a</text><text x="3.5" y="16" font-size="6.5" font-family="Liberation Sans" fill="#4848ff">c</text></svg><svg style="position:absolute;left:818.0px;top:820px" width="16" height="16" viewBox="0 0 16 16" shape-rendering="crispEdges"><ellipse cx="8" cy="8" rx="7.3" ry="5.8" fill="#fff" stroke="#202020" stroke-width="1.4" shape-rendering="auto"/><path d="M1 8.500c4-2 8-1 10.5 3M8.5 2.500c2 2 2.5 5 1 7.500M9.8 7c2-1.5 4-1.5 5.5-.5" stroke="#202020" stroke-width="1.1" fill="none" shape-rendering="auto"/></svg><svg style="position:absolute;left:840.0px;top:820px" width="16" height="16" viewBox="0 0 16 16" shape-rendering="crispEdges"><path d="M4.5 0v16M11.5 0v16M0 4.500h16M0 11.500h16" stroke="#a0a0a0" stroke-width="1.2"/></svg><svg style="position:absolute;left:862.5px;top:820px" width="16" height="16" viewBox="0 0 16 16" shape-rendering="crispEdges"><path d="M8 .700l7.3 7.3-7.3 7.3-7.3-7.300z" fill="none" stroke="#a0a0a0" stroke-width="1" shape-rendering="auto"/><circle cx="8" cy="8" r="2.4" fill="#a0a0a0" shape-rendering="auto"/></svg><svg style="position:absolute;left:892.0px;top:820px" width="16" height="16" viewBox="0 0 16 16" shape-rendering="crispEdges"><rect x=".7" y="1.7" width="14.6" height="12.6" fill="#e8e8e8" stroke="#a0a0a0" stroke-width="1.3"/><path d="M3 5l3 1 2-2 3 2 2-1M3 11l2-3 3 2 2-3 3 3M5 5v3M11 6v4" stroke="#a0a0a0" stroke-width="1.5" fill="none" shape-rendering="auto"/></svg><svg style="position:absolute;left:914.0px;top:820px" width="16" height="16" viewBox="0 0 16 16" shape-rendering="crispEdges"><circle cx="8" cy="8" r="7.3" fill="#3636c4" shape-rendering="auto"/><circle cx="6.6" cy="7" r="5.4" fill="#4848ff" shape-rendering="auto"/><circle cx="5" cy="5.8" r="3.3" fill="#c8d8ff" shape-rendering="auto"/><path d="M5 2v7.600M1.2 5.800h7.600M2.3 3.100l5.4 5.400M7.7 3.100l-5.4 5.4" stroke="#fff" stroke-width=".9" shape-rendering="auto"/><circle cx="5" cy="5.8" r="1.6" fill="#fff" shape-rendering="auto"/></svg><svg style="position:absolute;left:964.0px;top:820px" width="16" height="16" viewBox="0 0 16 16" shape-rendering="crispEdges"><path d="M4.5 .700v12l2.8-2.5 2 4.8 1.8-.8-2-4.600h3.600z" fill="#f4f4f4" stroke="#a0a0a0" stroke-width="1" shape-rendering="auto"/></svg><svg style="position:absolute;left:994.0px;top:820px" width="16" height="16" viewBox="0 0 16 16" shape-rendering="crispEdges"><path d="M8 0l3 3.500h-6zM8 16l3-3.500h-6zM0 8l3.5-3v6zM16 8l-3.5-3v6z" fill="#a0a0a0" shape-rendering="auto"/><path d="M8 3v10M3 8h10" stroke="#a0a0a0" stroke-width="1.4"/><circle cx="8" cy="8" r="2.4" fill="#f0f0f0" stroke="#a0a0a0" stroke-width="1.4" shape-rendering="auto"/></svg><svg style="position:absolute;left:1016.0px;top:820px" width="16" height="16" viewBox="0 0 16 16" shape-rendering="crispEdges"><path d="M12.5 5.500a5.6 5.6 0 1 0 1.3 4.5" stroke="#a0a0a0" stroke-width="1.8" fill="none" shape-rendering="auto"/><path d="M8.5 .500l5.5 2-2 5z" fill="#a0a0a0" shape-rendering="auto"/></svg><svg style="position:absolute;left:1038.0px;top:820px" width="16" height="16" viewBox="0 0 16 16" shape-rendering="crispEdges"><path d="M8 0l3 3.500h-6zM8 16l3-3.500h-6zM0 8l3.5-3v6zM16 8l-3.5-3v6z" fill="#a0a0a0" shape-rendering="auto"/><path d="M8 3v10M3 8h10" stroke="#a0a0a0" stroke-width="1.6"/></svg><svg style="position:absolute;left:1060.0px;top:820px" width="16" height="16" viewBox="0 0 16 16" shape-rendering="crispEdges"><path d="M1 1l14 14M15 1l-14 14" stroke="#a0a0a0" stroke-width="1.6" shape-rendering="auto"/><path d="M.5 .500h5l-5 5zM15.5 .500h-5l5 5zM.5 15.500h5l-5-5zM15.5 15.500h-5l5-5z" fill="#a0a0a0" shape-rendering="auto"/><rect x="5" y="5" width="6" height="6" fill="#f0f0f0" stroke="#a0a0a0" stroke-width="1.5"/></svg><svg style="position:absolute;left:1081.0px;top:820px" width="16" height="16" viewBox="0 0 16 16" shape-rendering="crispEdges"><path d="M14.5 2l-13 6 13 5.5" stroke="#a0a0a0" stroke-width="1.6" fill="none" stroke-linejoin="round" shape-rendering="auto"/><path d="M14 5v1.500M14 8v3" stroke="#a0a0a0" stroke-width="1.4"/></svg><svg style="position:absolute;left:1112.0px;top:820px" width="16" height="16" viewBox="0 0 16 16" shape-rendering="crispEdges"><path d="M2.5 15v-13.500h4c4.5 0 4.5 6.5 0 6.500h-4M6.5 15v-9.500h3c3.5 0 3.5 5 0 5h-1l5 4.500M5 8l3 3" stroke="#a0a0a0" stroke-width="1.5" fill="none" shape-rendering="auto"/></svg><svg style="position:absolute;left:1159.0px;top:820px" width="16" height="16" viewBox="0 0 16 16" shape-rendering="crispEdges"><path d="M1.5 1v13.500h14M4.5 6v8M7.5 6v8M10.5 6v8M13.5 6v8" stroke="#a0a0a0" stroke-width="1.1" fill="none"/></svg><svg style="position:absolute;left:1181.0px;top:820px" width="16" height="16" viewBox="0 0 16 16" shape-rendering="crispEdges"><path d="M7.5 .500c3 2.5 5.5 8.5 6.5 13.500h-13.500z" fill="none" stroke="#a0a0a0" stroke-width="1.1" shape-rendering="auto"/><path d="M.5 14.500h15" stroke="#a0a0a0" stroke-width="1.1"/></svg><svg style="position:absolute;left:1203.0px;top:820px" width="16" height="16" viewBox="0 0 16 16" shape-rendering="crispEdges"><circle cx="5" cy="11" r="3.7" fill="none" stroke="#a0a0a0" stroke-width="1.2" shape-rendering="auto"/><path d="M6 8l2.5-6M7 6l8-4M5 1.500l3.5 1" stroke="#a0a0a0" stroke-width="1.5" fill="none" shape-rendering="auto"/></svg><div style="position:absolute;left:84px;top:818px;width:1px;height:20px;background:#c8c8c8"></div><div style="position:absolute;left:180px;top:818px;width:1px;height:20px;background:#c8c8c8"></div><div style="position:absolute;left:276px;top:818px;width:1px;height:20px;background:#c8c8c8"></div><div style="position:absolute;left:328px;top:818px;width:1px;height:20px;background:#c8c8c8"></div><div style="position:absolute;left:380px;top:818px;width:1px;height:20px;background:#c8c8c8"></div><div style="position:absolute;left:454px;top:818px;width:1px;height:20px;background:#c8c8c8"></div><div style="position:absolute;left:619px;top:818px;width:1px;height:20px;background:#c8c8c8"></div><div style="position:absolute;left:693px;top:818px;width:1px;height:20px;background:#c8c8c8"></div><div style="position:absolute;left:789px;top:818px;width:1px;height:20px;background:#c8c8c8"></div><div style="position:absolute;left:885px;top:818px;width:1px;height:20px;background:#c8c8c8"></div><div style="position:absolute;left:987px;top:818px;width:1px;height:20px;background:#c8c8c8"></div><div style="position:absolute;left:1105px;top:818px;width:1px;height:20px;background:#c8c8c8"></div><svg style="position:absolute;left:7px;top:820px;" width="3" height="15" viewBox="0 0 3 15"><rect x="0" y="0" width="3" height="1" fill="#b8b8b8"/><rect x="0" y="2" width="3" height="1" fill="#b8b8b8"/><rect x="0" y="4" width="3" height="1" fill="#b8b8b8"/><rect x="0" y="6" width="3" height="1" fill="#b8b8b8"/><rect x="0" y="8" width="3" height="1" fill="#b8b8b8"/><rect x="0" y="10" width="3" height="1" fill="#b8b8b8"/><rect x="0" y="12" width="3" height="1" fill="#b8b8b8"/><rect x="0" y="14" width="3" height="1" fill="#b8b8b8"/></svg><svg style="position:absolute;left:520px;top:820px;" width="3" height="15" viewBox="0 0 3 15"><rect x="0" y="0" width="3" height="1" fill="#b8b8b8"/><rect x="0" y="2" width="3" height="1" fill="#b8b8b8"/><rect x="0" y="4" width="3" height="1" fill="#b8b8b8"/><rect x="0" y="6" width="3" height="1" fill="#b8b8b8"/><rect x="0" y="8" width="3" height="1" fill="#b8b8b8"/><rect x="0" y="10" width="3" height="1" fill="#b8b8b8"/><rect x="0" y="12" width="3" height="1" fill="#b8b8b8"/><rect x="0" y="14" width="3" height="1" fill="#b8b8b8"/></svg><svg style="position:absolute;left:954px;top:820px;" width="3" height="15" viewBox="0 0 3 15"><rect x="0" y="0" width="3" height="1" fill="#b8b8b8"/><rect x="0" y="2" width="3" height="1" fill="#b8b8b8"/><rect x="0" y="4" width="3" height="1" fill="#b8b8b8"/><rect x="0" y="6" width="3" height="1" fill="#b8b8b8"/><rect x="0" y="8" width="3" height="1" fill="#b8b8b8"/><rect x="0" y="10" width="3" height="1" fill="#b8b8b8"/><rect x="0" y="12" width="3" height="1" fill="#b8b8b8"/><rect x="0" y="14" width="3" height="1" fill="#b8b8b8"/></svg><svg style="position:absolute;left:1149px;top:820px;" width="3" height="15" viewBox="0 0 3 15"><rect x="0" y="0" width="3" height="1" fill="#b8b8b8"/><rect x="0" y="2" width="3" height="1" fill="#b8b8b8"/><rect x="0" y="4" width="3" height="1" fill="#b8b8b8"/><rect x="0" y="6" width="3" height="1" fill="#b8b8b8"/><rect x="0" y="8" width="3" height="1" fill="#b8b8b8"/><rect x="0" y="10" width="3" height="1" fill="#b8b8b8"/><rect x="0" y="12" width="3" height="1" fill="#b8b8b8"/><rect x="0" y="14" width="3" height="1" fill="#b8b8b8"/></svg><svg style="position:absolute;left:504.4px;top:829px" width="8" height="5" viewBox="0 0 8 5"><path d="M0.5 0.5h7l-3.5 4z" fill="#000"/></svg><svg style="position:absolute;left:935.4px;top:829px" width="8" height="5" viewBox="0 0 8 5"><path d="M0.5 0.5h7l-3.5 4z" fill="#000"/></svg><svg style="position:absolute;left:1133.6px;top:829px" width="8" height="5" viewBox="0 0 8 5"><path d="M0.5 0.5h7l-3.5 4z" fill="#000"/></svg><svg style="position:absolute;left:1224.4px;top:829px" width="8" height="5" viewBox="0 0 8 5"><path d="M0.5 0.5h7l-3.5 4z" fill="#000"/></svg><div style="position:absolute;left:1482px;top:80px;width:419px;height:17px;background:#f0f0f0;box-sizing:border-box;border:1px solid #a0a0a0"></div><div style="position:absolute;left:1486px;top:83.87px;font-size:11.5px;line-height:1;white-space:nowrap;color:#000;letter-spacing:-0.005px;">Structure Solution Progress</div><svg style="position:absolute;left:1864px;top:82px;" width="34" height="14" viewBox="0 0 34 14"><path d="M6.5 2.5h4v6h-4zM9.5 2.5v6M4.5 8.5h8M8.5 8.5v4" stroke="#000" fill="none" shape-rendering="crispEdges"/><path d="M21.5 3.5l7 7M28.5 3.5l-7 7" stroke="#000" stroke-width="1.5"/></svg><div style="position:absolute;left:1482px;top:100px;width:419px;height:20px;background:#e1e1e1;box-sizing:border-box;border:1px solid #d0d0d0"></div><div style="position:absolute;left:1486px;top:104.67px;font-size:11.5px;line-height:1;white-space:nowrap;color:#000;letter-spacing:-0.061px;">All documents/processes</div><svg style="position:absolute;left:1884px;top:105px;" width="14" height="10" viewBox="0 0 14 10"><path d="M2.5 2.5l4.5 4.5 4.5-4.5" stroke="#505050" stroke-width="1.1" fill="none"/></svg><div style="position:absolute;left:1482px;top:120px;width:419px;height:242px;background:#000"></div><div style="position:absolute;left:1483px;top:140px;width:417px;height:201px;background:#404040"></div><svg style="position:absolute;left:1483px;top:139px" width="418" height="203" viewBox="1483 139 418 203"><path d="M1484.5 141V340M1505.5 141V340M1526.5 141V340M1546.5 141V340M1567.5 141V340M1588.5 141V340M1608.5 141V340M1629.5 141V340M1650.5 141V340M1671.5 141V340M1692.5 141V340M1712.5 141V340M1733.5 141V340M1754.5 141V340M1774.5 141V340M1795.5 141V340M1816.5 141V340M1837.5 141V340M1858.5 141V340M1878.5 141V340M1899.5 141V340M1484 340.5H1900M1484 323.5H1900M1484 307.5H1900M1484 290.5H1900M1484 273.5H1900M1484 257.5H1900M1484 240.5H1900M1484 223.5H1900M1484 206.5H1900M1484 190.5H1900M1484 173.5H1900M1484 156.5H1900M1484 140.5H1900" stroke="#008000" fill="none" shape-rendering="crispEdges"/><path d="M1484 173.5H1875M1484 257.5H1880" stroke="#00a000" fill="none" shape-rendering="crispEdges"/><polyline points="1484.5,204.0 1484.5,141.0 1600.0,141.0 1603.2,151.9 1608.3,140.8 1620.0,147.5 1625.8,140.8 1629.2,177.9 1632.6,140.8 1643.7,153.2 1652.1,140.8 1655.0,141.0 1658.2,165.4 1663.9,176.2 1671.3,193.7 1675.7,160.0 1682.5,167.7 1687.5,182.3 1691.9,140.8 1696.6,140.8 1700.4,199.1 1704.4,204.8 1708.4,202.5 1716.2,225.1 1725.3,221.0 1731.4,227.4 1734.0,226.0 1737.1,211.6 1740.8,243.6 1749.9,249.4 1756.7,258.8 1762.7,271.3 1766.8,268.9 1771.2,274.7 1783.7,276.3 1787.0,280.7 1792.1,295.9 1800.5,293.5 1805.6,296.9 1809.0,294.9 1820.8,295.9 1829.2,305.0 1837.6,303.7 1841.0,305.0 1861.2,306.0 1869.7,308.4 1891.6,308.4 1899.0,307.4" fill="none" stroke="#ffff20" stroke-width="2.2" stroke-linejoin="round"/><polyline points="1484.2,326.3 1484.2,315.1 1488.5,310.1 1491.9,312.8 1495.3,310.1 1502.0,318.5 1505.4,316.1 1537.5,315.5 1542.5,313.4 1554.3,319.5 1559.4,314.5 1569.5,320.5 1576.2,315.5 1583.0,316.1 1592.1,310.1 1596.5,314.5 1600.0,313.5 1604.9,320.5 1610.0,312.1 1620.1,319.5 1625.1,312.8 1629.5,322.9 1633.6,317.8 1643.7,319.5 1650.4,311.1 1655.5,317.8 1663.9,323.9 1672.4,323.9 1677.4,321.9 1687.5,323.6 1694.3,318.9 1701.0,325.3 1709.5,325.3 1714.5,328.0 1736.4,328.0 1743.2,330.6 1755.0,331.3 1760.0,333.0 1783.7,333.7 1790.4,335.4 1807.3,335.7 1814.0,334.7 1820.8,335.7 1851.1,337.0 1899.0,337.0" fill="none" stroke="#20ffff" stroke-width="2.2" stroke-linejoin="round"/></svg><div style="position:absolute;right:5px;top:168.57px;font-size:11.5px;line-height:1;white-space:nowrap;color:#008000;">100</div><div style="position:absolute;right:5px;top:252.57px;font-size:11.5px;line-height:1;white-space:nowrap;color:#008000;">50</div><div style="position:absolute;left:1485px;top:125.87px;font-size:11.5px;line-height:1;white-space:nowrap;color:#fff;letter-spacing:-0.229px;">Endeavour1_Solution_20251217_100604_Seed_1-3.edf: Global opt.&nbsp; Seed=3&nbsp; Ste...</div><div style="position:absolute;left:1484px;top:143px;width:117px;height:13px;background:#000"></div><div style="position:absolute;left:1486px;top:144.87px;font-size:11.5px;line-height:1;white-space:nowrap;color:#fff;letter-spacing:0.121px;">Optimization finished.</div><div style="position:absolute;left:1725px;top:143px;width:173px;height:13px;background:#000"></div><div style="position:absolute;left:1729.5px;top:144.87px;font-size:11.5px;line-height:1;white-space:nowrap;color:#ffff20;letter-spacing:-0.133px;">R-factor=19.1%</div><div style="position:absolute;left:1814.5px;top:144.87px;font-size:11.5px;line-height:1;white-space:nowrap;color:#20ffff;letter-spacing:-0.181px;">Cost f.=1.93569</div><svg style="position:absolute;left:1483px;top:340px;" width="200" height="23" viewBox="0 0 200 23"><path d="M7 8h10l-5 8z" fill="#808080"/><rect x="80" y="7" width="9" height="9" fill="#c8c8c8"/><path d="M157.5 7.5l8 8M165.5 7.5l-8 8" stroke="#fff" stroke-width="1.2"/></svg><div style="position:absolute;left:1505px;top:347.07px;font-size:11.5px;line-height:1;white-space:nowrap;color:#808080;letter-spacing:-0.403px;">Expand</div><div style="position:absolute;left:1578px;top:347.07px;font-size:11.5px;line-height:1;white-space:nowrap;color:#fff;letter-spacing:-0.057px;">Stop</div><div style="position:absolute;left:1655px;top:347.07px;font-size:11.5px;line-height:1;white-space:nowrap;color:#fff;letter-spacing:-0.566px;">Remove</div><div style="position:absolute;left:1482px;top:362px;width:419px;height:242px;background:#000"></div><div style="position:absolute;left:1483px;top:382px;width:417px;height:201px;background:#404040"></div><svg style="position:absolute;left:1483px;top:381px" width="418" height="203" viewBox="1483 381 418 203"><path d="M1484.5 383V582M1505.5 383V582M1526.5 383V582M1546.5 383V582M1567.5 383V582M1588.5 383V582M1608.5 383V582M1629.5 383V582M1650.5 383V582M1671.5 383V582M1692.5 383V582M1712.5 383V582M1733.5 383V582M1754.5 383V582M1774.5 383V582M1795.5 383V582M1816.5 383V582M1837.5 383V582M1858.5 383V582M1878.5 383V582M1899.5 383V582M1484 582.5H1900M1484 565.5H1900M1484 549.5H1900M1484 532.5H1900M1484 515.5H1900M1484 499.5H1900M1484 482.5H1900M1484 465.5H1900M1484 448.5H1900M1484 432.5H1900M1484 415.5H1900M1484 398.5H1900M1484 382.5H1900" stroke="#008000" fill="none" shape-rendering="crispEdges"/><path d="M1484 415.5H1875M1484 499.5H1880" stroke="#00a000" fill="none" shape-rendering="crispEdges"/><polyline points="1484.5,383.0 1559.4,383.0 1559.4,399.7 1567.0,401.2 1571.7,416.6 1578.5,399.7 1582.0,383.0 1599.4,398.1 1604.7,402.8 1609.3,423.4 1629.3,383.4 1633.3,396.6 1650.3,385.8 1652.0,395.0 1654.3,444.4 1658.0,411.1 1662.6,435.7 1671.9,411.1 1685.7,408.0 1689.4,402.8 1692.5,388.9 1696.5,421.3 1701.1,438.2 1704.2,482.0 1708.2,428.0 1715.9,460.4 1721.8,443.4 1729.5,473.6 1733.5,451.1 1736.6,484.4 1741.2,489.7 1748.9,489.1 1754.1,485.0 1762.1,501.4 1765.8,495.2 1776.6,490.6 1786.8,490.6 1795.7,502.9 1805.9,498.9 1818.2,502.9 1839.8,502.3 1864.5,503.5 1882.9,502.9 1899.9,505.1" fill="none" stroke="#ffff20" stroke-width="2.2" stroke-linejoin="round"/><polyline points="1483.9,559.0 1488.5,555.9 1491.6,560.9 1496.2,552.2 1503.9,560.9 1516.2,553.8 1522.4,559.9 1537.8,555.9 1550.1,561.5 1562.4,561.5 1567.7,559.0 1572.6,563.9 1585.6,556.2 1593.3,556.2 1596.4,561.5 1605.6,562.1 1610.2,564.6 1625.6,562.4 1629.3,556.9 1633.3,559.9 1650.3,559.0 1654.3,567.0 1658.0,559.3 1661.7,566.1 1671.9,564.6 1691.9,563.0 1704.2,570.7 1708.2,566.1 1722.7,567.6 1730.4,570.7 1733.5,568.3 1738.1,571.6 1759.7,573.8 1778.2,572.3 1793.6,574.4 1802.8,573.2 1809.0,574.4 1899.9,574.4" fill="none" stroke="#20ffff" stroke-width="2.2" stroke-linejoin="round"/></svg><div style="position:absolute;right:5px;top:410.57px;font-size:11.5px;line-height:1;white-space:nowrap;color:#008000;">100</div><div style="position:absolute;right:5px;top:494.57px;font-size:11.5px;line-height:1;white-space:nowrap;color:#008000;">50</div><div style="position:absolute;left:1485px;top:367.87px;font-size:11.5px;line-height:1;white-space:nowrap;color:#fff;letter-spacing:-0.229px;">Endeavour1_Solution_20251217_100604_Seed_4-5.edf: Global opt.&nbsp; Seed=4&nbsp; Ste...</div><div style="position:absolute;left:1484px;top:385px;width:117px;height:13px;background:#000"></div><div style="position:absolute;left:1486px;top:386.87px;font-size:11.5px;line-height:1;white-space:nowrap;color:#fff;letter-spacing:0.121px;">Optimization finished.</div><div style="position:absolute;left:1725px;top:385px;width:173px;height:13px;background:#000"></div><div style="position:absolute;left:1729.5px;top:386.87px;font-size:11.5px;line-height:1;white-space:nowrap;color:#ffff20;letter-spacing:-0.133px;">R-factor=46.4%</div><div style="position:absolute;left:1814.5px;top:386.87px;font-size:11.5px;line-height:1;white-space:nowrap;color:#20ffff;letter-spacing:-0.181px;">Cost f.=4.77504</div><svg style="position:absolute;left:1483px;top:582px;" width="200" height="23" viewBox="0 0 200 23"><path d="M7 8h10l-5 8z" fill="#808080"/><rect x="80" y="7" width="9" height="9" fill="#c8c8c8"/><path d="M157.5 7.5l8 8M165.5 7.5l-8 8" stroke="#fff" stroke-width="1.2"/></svg><div style="position:absolute;left:1505px;top:589.07px;font-size:11.5px;line-height:1;white-space:nowrap;color:#808080;letter-spacing:-0.403px;">Expand</div><div style="position:absolute;left:1578px;top:589.07px;font-size:11.5px;line-height:1;white-space:nowrap;color:#fff;letter-spacing:-0.057px;">Stop</div><div style="position:absolute;left:1655px;top:589.07px;font-size:11.5px;line-height:1;white-space:nowrap;color:#fff;letter-spacing:-0.566px;">Remove</div><div style="position:absolute;left:1482px;top:361px;width:419px;height:1px;background:#6a6a6a"></div><div style="position:absolute;left:1900px;top:80px;width:1px;height:524px;background:#f8f8f8"></div>
</body></html>
